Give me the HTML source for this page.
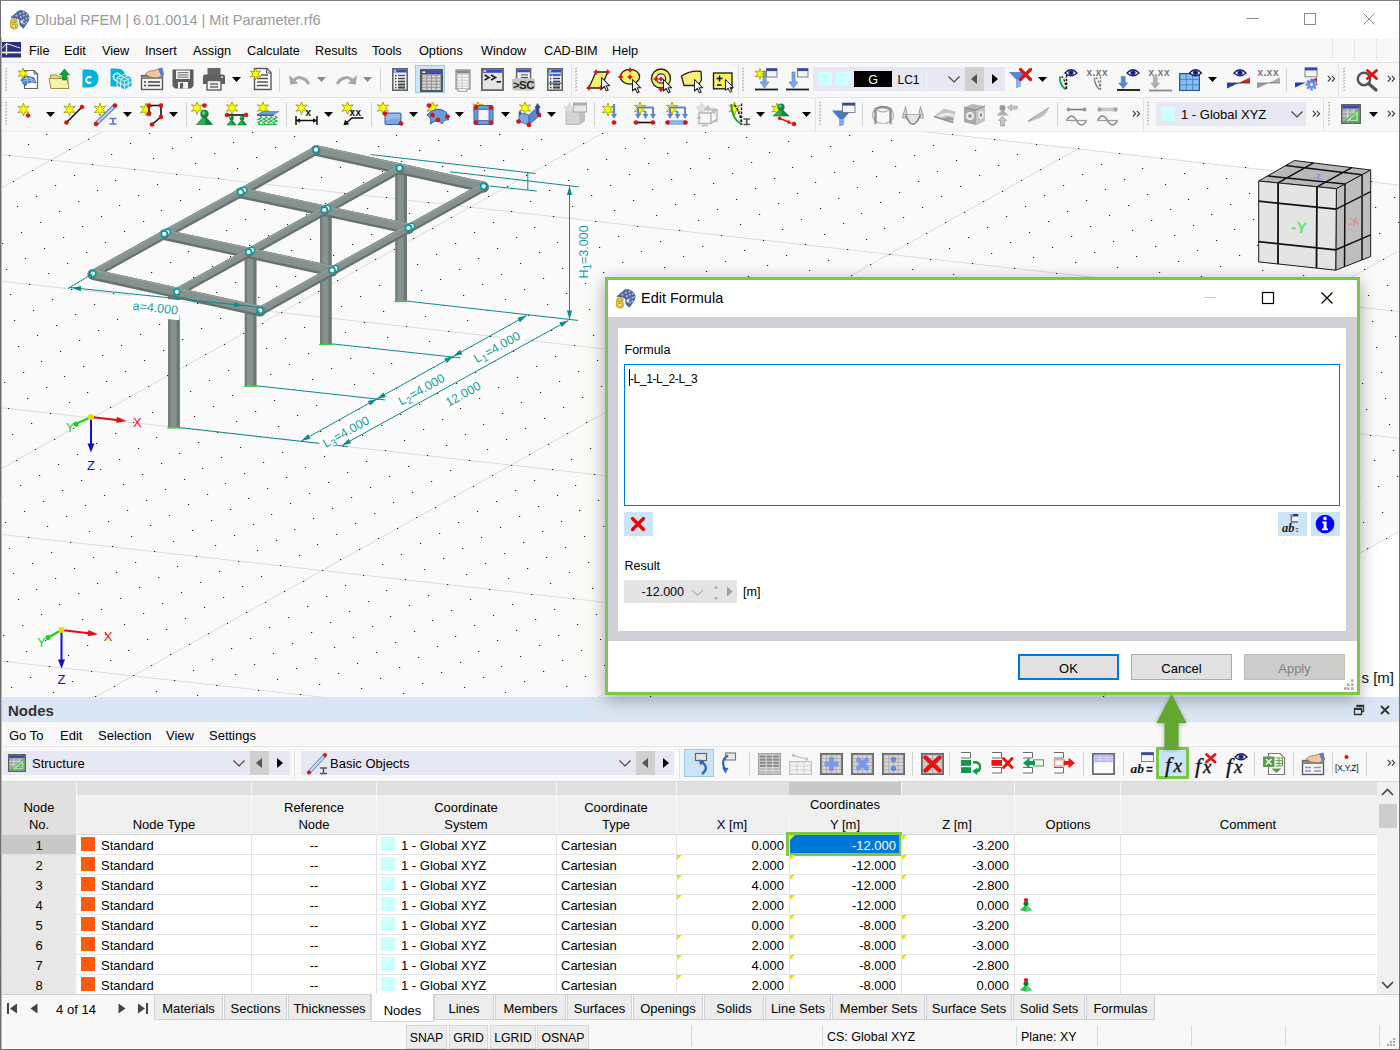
<!DOCTYPE html>
<html><head><meta charset="utf-8"><title>Dlubal RFEM</title>
<style>
html,body{margin:0;padding:0;}
body{width:1400px;height:1050px;overflow:hidden;position:relative;background:#f8f8f8;font-family:"Liberation Sans",sans-serif;font-size:13px;}
body div,body svg{position:absolute;box-sizing:border-box;}
.t{white-space:pre;}
</style></head><body>
<div style="left:0px;top:0px;width:1400px;height:38px;background:#ffffff;"></div>
<div class="t" style="top:12.73px;font-size:14.5px;line-height:14.5px;color:#9a9a9a;white-space:pre;left:35px;">Dlubal RFEM | 6.01.0014 | Mit Parameter.rf6</div>
<svg style="left:1240px;top:8px;" width="140" height="24" viewBox="0 0 140 24"><path d="M6.5 10.5H18.5" stroke="#8a8a8a" stroke-width="1" fill="none"/><rect x="64.5" y="5.5" width="11" height="11" stroke="#8a8a8a" fill="none"/><path d="M123.5 5.5L134.5 16.5M134.5 5.5L123.5 16.5" stroke="#8a8a8a" stroke-width="1" fill="none"/></svg>
<div style="left:0px;top:38px;width:1400px;height:25px;background:#f8f8f8;"></div>
<div class="t" style="top:44.95px;font-size:12.7px;line-height:12.7px;color:#000;white-space:pre;left:29px;">File</div>
<div class="t" style="top:44.95px;font-size:12.7px;line-height:12.7px;color:#000;white-space:pre;left:64px;">Edit</div>
<div class="t" style="top:44.95px;font-size:12.7px;line-height:12.7px;color:#000;white-space:pre;left:102px;">View</div>
<div class="t" style="top:44.95px;font-size:12.7px;line-height:12.7px;color:#000;white-space:pre;left:145px;">Insert</div>
<div class="t" style="top:44.95px;font-size:12.7px;line-height:12.7px;color:#000;white-space:pre;left:193px;">Assign</div>
<div class="t" style="top:44.95px;font-size:12.7px;line-height:12.7px;color:#000;white-space:pre;left:247px;">Calculate</div>
<div class="t" style="top:44.95px;font-size:12.7px;line-height:12.7px;color:#000;white-space:pre;left:315px;">Results</div>
<div class="t" style="top:44.95px;font-size:12.7px;line-height:12.7px;color:#000;white-space:pre;left:372px;">Tools</div>
<div class="t" style="top:44.95px;font-size:12.7px;line-height:12.7px;color:#000;white-space:pre;left:419px;">Options</div>
<div class="t" style="top:44.95px;font-size:12.7px;line-height:12.7px;color:#000;white-space:pre;left:481px;">Window</div>
<div class="t" style="top:44.95px;font-size:12.7px;line-height:12.7px;color:#000;white-space:pre;left:544px;">CAD-BIM</div>
<div class="t" style="top:44.95px;font-size:12.7px;line-height:12.7px;color:#000;white-space:pre;left:612px;">Help</div>
<div style="left:1332px;top:38px;width:1px;height:22px;background:#e3e8f0;"></div>
<div style="left:1354px;top:38px;width:1px;height:22px;background:#e3e8f0;"></div>
<div style="left:1376px;top:38px;width:1px;height:22px;background:#e3e8f0;"></div>
<div style="left:0px;top:62px;width:1400px;height:1px;background:#e6e6e6;"></div>
<div style="left:0px;top:63px;width:1400px;height:34px;background:#f8f8f8;"></div>
<div style="left:0px;top:97px;width:1400px;height:1px;background:#e6e6e6;"></div>
<div style="left:0px;top:98px;width:1400px;height:34px;background:#f8f8f8;"></div>
<div style="left:0px;top:131px;width:1400px;height:1px;background:#ededed;"></div>
<svg style="left:5px;top:67px;" width="3" height="26" viewBox="0 0 3 26"><path d="M0.3 2.2L1.9 0.6" stroke="#b0b0b0" stroke-width="1.1"/><path d="M0.3 5.3L1.9 3.7" stroke="#b0b0b0" stroke-width="1.1"/><path d="M0.3 8.4L1.9 6.8" stroke="#b0b0b0" stroke-width="1.1"/><path d="M0.3 11.5L1.9 9.9" stroke="#b0b0b0" stroke-width="1.1"/><path d="M0.3 14.6L1.9 13.0" stroke="#b0b0b0" stroke-width="1.1"/><path d="M0.3 17.7L1.9 16.1" stroke="#b0b0b0" stroke-width="1.1"/><path d="M0.3 20.8L1.9 19.2" stroke="#b0b0b0" stroke-width="1.1"/><path d="M0.3 23.9L1.9 22.3" stroke="#b0b0b0" stroke-width="1.1"/></svg>
<div style="left:279px;top:68px;width:1px;height:24px;background:#d4d4d4;"></div>
<div style="left:380px;top:68px;width:1px;height:24px;background:#d4d4d4;"></div>
<div style="left:571px;top:64px;width:1px;height:33px;background:#e2e2e2;"></div>
<svg style="left:575px;top:67px;" width="3" height="26" viewBox="0 0 3 26"><path d="M0.3 2.2L1.9 0.6" stroke="#b0b0b0" stroke-width="1.1"/><path d="M0.3 5.3L1.9 3.7" stroke="#b0b0b0" stroke-width="1.1"/><path d="M0.3 8.4L1.9 6.8" stroke="#b0b0b0" stroke-width="1.1"/><path d="M0.3 11.5L1.9 9.9" stroke="#b0b0b0" stroke-width="1.1"/><path d="M0.3 14.6L1.9 13.0" stroke="#b0b0b0" stroke-width="1.1"/><path d="M0.3 17.7L1.9 16.1" stroke="#b0b0b0" stroke-width="1.1"/><path d="M0.3 20.8L1.9 19.2" stroke="#b0b0b0" stroke-width="1.1"/><path d="M0.3 23.9L1.9 22.3" stroke="#b0b0b0" stroke-width="1.1"/></svg>
<div style="left:738px;top:64px;width:1px;height:33px;background:#e2e2e2;"></div>
<svg style="left:742px;top:67px;" width="3" height="26" viewBox="0 0 3 26"><path d="M0.3 2.2L1.9 0.6" stroke="#b0b0b0" stroke-width="1.1"/><path d="M0.3 5.3L1.9 3.7" stroke="#b0b0b0" stroke-width="1.1"/><path d="M0.3 8.4L1.9 6.8" stroke="#b0b0b0" stroke-width="1.1"/><path d="M0.3 11.5L1.9 9.9" stroke="#b0b0b0" stroke-width="1.1"/><path d="M0.3 14.6L1.9 13.0" stroke="#b0b0b0" stroke-width="1.1"/><path d="M0.3 17.7L1.9 16.1" stroke="#b0b0b0" stroke-width="1.1"/><path d="M0.3 20.8L1.9 19.2" stroke="#b0b0b0" stroke-width="1.1"/><path d="M0.3 23.9L1.9 22.3" stroke="#b0b0b0" stroke-width="1.1"/></svg>
<div style="left:1286px;top:68px;width:1px;height:24px;background:#d4d4d4;"></div>
<div style="left:1338px;top:64px;width:1px;height:33px;background:#e2e2e2;"></div>
<svg style="left:1343px;top:67px;" width="3" height="26" viewBox="0 0 3 26"><path d="M0.3 2.2L1.9 0.6" stroke="#b0b0b0" stroke-width="1.1"/><path d="M0.3 5.3L1.9 3.7" stroke="#b0b0b0" stroke-width="1.1"/><path d="M0.3 8.4L1.9 6.8" stroke="#b0b0b0" stroke-width="1.1"/><path d="M0.3 11.5L1.9 9.9" stroke="#b0b0b0" stroke-width="1.1"/><path d="M0.3 14.6L1.9 13.0" stroke="#b0b0b0" stroke-width="1.1"/><path d="M0.3 17.7L1.9 16.1" stroke="#b0b0b0" stroke-width="1.1"/><path d="M0.3 20.8L1.9 19.2" stroke="#b0b0b0" stroke-width="1.1"/><path d="M0.3 23.9L1.9 22.3" stroke="#b0b0b0" stroke-width="1.1"/></svg>
<svg style="left:1327px;top:75px;" width="9" height="8" viewBox="0 0 9 8"><path d="M0.8 0.8L3.6 3.7L0.8 6.6M4.8 0.8L7.6 3.7L4.8 6.6" stroke="#3a3a3a" stroke-width="1.15" fill="none"/></svg>
<svg style="left:1387px;top:75px;" width="9" height="8" viewBox="0 0 9 8"><path d="M0.8 0.8L3.6 3.7L0.8 6.6M4.8 0.8L7.6 3.7L4.8 6.6" stroke="#3a3a3a" stroke-width="1.15" fill="none"/></svg>
<div style="left:415px;top:65px;width:30px;height:28px;background:#cce4f7;border:1px solid #99c9ef;"></div>
<div style="left:813px;top:67px;width:192px;height:24px;background:#e8e8f4;"></div>
<div style="left:818px;top:72px;width:14px;height:14px;background:#ccffff;"></div>
<div style="left:836px;top:72px;width:14px;height:14px;background:#ccffff;"></div>
<div style="left:854px;top:71px;width:38px;height:16px;background:#000000;"></div>
<div class="t" style="top:74.42px;font-size:12.5px;line-height:12.5px;color:#fff;white-space:pre;left:673px;width:400px;text-align:center;">G</div>
<div class="t" style="top:73.84px;font-size:12px;line-height:12px;color:#000;white-space:pre;left:897.5px;">LC1</div>
<div style="left:926px;top:70px;width:1px;height:19px;background:#f4f4fa;"></div>
<svg style="left:948px;top:76px;" width="12" height="7" viewBox="0 0 12 7"><path d="M0.5 0.5L6 6L11.5 0.5" stroke="#444" stroke-width="1.2" fill="none"/></svg>
<div style="left:965px;top:67px;width:19px;height:24px;background:#d0d0d0;"></div>
<div style="left:985px;top:67px;width:19px;height:24px;background:#e8e8f4;"></div>
<svg style="left:970px;top:74px;" width="8" height="10" viewBox="0 0 8 10"><path d="M7 0V10L1 5Z" fill="#555"/></svg>
<svg style="left:991px;top:74px;" width="8" height="10" viewBox="0 0 8 10"><path d="M1 0V10L7 5Z" fill="#000"/></svg>
<svg style="left:5px;top:101px;" width="3" height="26" viewBox="0 0 3 26"><path d="M0.3 2.2L1.9 0.6" stroke="#b0b0b0" stroke-width="1.1"/><path d="M0.3 5.3L1.9 3.7" stroke="#b0b0b0" stroke-width="1.1"/><path d="M0.3 8.4L1.9 6.8" stroke="#b0b0b0" stroke-width="1.1"/><path d="M0.3 11.5L1.9 9.9" stroke="#b0b0b0" stroke-width="1.1"/><path d="M0.3 14.6L1.9 13.0" stroke="#b0b0b0" stroke-width="1.1"/><path d="M0.3 17.7L1.9 16.1" stroke="#b0b0b0" stroke-width="1.1"/><path d="M0.3 20.8L1.9 19.2" stroke="#b0b0b0" stroke-width="1.1"/><path d="M0.3 23.9L1.9 22.3" stroke="#b0b0b0" stroke-width="1.1"/></svg>
<div style="left:186px;top:102px;width:1px;height:24px;background:#d4d4d4;"></div>
<div style="left:286px;top:102px;width:1px;height:24px;background:#d4d4d4;"></div>
<div style="left:371px;top:102px;width:1px;height:24px;background:#d4d4d4;"></div>
<div style="left:594px;top:102px;width:1px;height:24px;background:#d4d4d4;"></div>
<div style="left:815px;top:98px;width:1px;height:33px;background:#e2e2e2;"></div>
<svg style="left:819px;top:101px;" width="3" height="26" viewBox="0 0 3 26"><path d="M0.3 2.2L1.9 0.6" stroke="#b0b0b0" stroke-width="1.1"/><path d="M0.3 5.3L1.9 3.7" stroke="#b0b0b0" stroke-width="1.1"/><path d="M0.3 8.4L1.9 6.8" stroke="#b0b0b0" stroke-width="1.1"/><path d="M0.3 11.5L1.9 9.9" stroke="#b0b0b0" stroke-width="1.1"/><path d="M0.3 14.6L1.9 13.0" stroke="#b0b0b0" stroke-width="1.1"/><path d="M0.3 17.7L1.9 16.1" stroke="#b0b0b0" stroke-width="1.1"/><path d="M0.3 20.8L1.9 19.2" stroke="#b0b0b0" stroke-width="1.1"/><path d="M0.3 23.9L1.9 22.3" stroke="#b0b0b0" stroke-width="1.1"/></svg>
<div style="left:862px;top:102px;width:1px;height:24px;background:#d4d4d4;"></div>
<div style="left:1057px;top:102px;width:1px;height:24px;background:#d4d4d4;"></div>
<div style="left:1143px;top:98px;width:1px;height:33px;background:#e2e2e2;"></div>
<svg style="left:1147px;top:101px;" width="3" height="26" viewBox="0 0 3 26"><path d="M0.3 2.2L1.9 0.6" stroke="#b0b0b0" stroke-width="1.1"/><path d="M0.3 5.3L1.9 3.7" stroke="#b0b0b0" stroke-width="1.1"/><path d="M0.3 8.4L1.9 6.8" stroke="#b0b0b0" stroke-width="1.1"/><path d="M0.3 11.5L1.9 9.9" stroke="#b0b0b0" stroke-width="1.1"/><path d="M0.3 14.6L1.9 13.0" stroke="#b0b0b0" stroke-width="1.1"/><path d="M0.3 17.7L1.9 16.1" stroke="#b0b0b0" stroke-width="1.1"/><path d="M0.3 20.8L1.9 19.2" stroke="#b0b0b0" stroke-width="1.1"/><path d="M0.3 23.9L1.9 22.3" stroke="#b0b0b0" stroke-width="1.1"/></svg>
<svg style="left:1132px;top:110px;" width="9" height="8" viewBox="0 0 9 8"><path d="M0.8 0.8L3.6 3.7L0.8 6.6M4.8 0.8L7.6 3.7L4.8 6.6" stroke="#3a3a3a" stroke-width="1.15" fill="none"/></svg>
<svg style="left:1312px;top:110px;" width="9" height="8" viewBox="0 0 9 8"><path d="M0.8 0.8L3.6 3.7L0.8 6.6M4.8 0.8L7.6 3.7L4.8 6.6" stroke="#3a3a3a" stroke-width="1.15" fill="none"/></svg>
<svg style="left:1387px;top:110px;" width="9" height="8" viewBox="0 0 9 8"><path d="M0.8 0.8L3.6 3.7L0.8 6.6M4.8 0.8L7.6 3.7L4.8 6.6" stroke="#3a3a3a" stroke-width="1.15" fill="none"/></svg>
<div style="left:1323px;top:98px;width:1px;height:33px;background:#e2e2e2;"></div>
<svg style="left:1328px;top:101px;" width="3" height="26" viewBox="0 0 3 26"><path d="M0.3 2.2L1.9 0.6" stroke="#b0b0b0" stroke-width="1.1"/><path d="M0.3 5.3L1.9 3.7" stroke="#b0b0b0" stroke-width="1.1"/><path d="M0.3 8.4L1.9 6.8" stroke="#b0b0b0" stroke-width="1.1"/><path d="M0.3 11.5L1.9 9.9" stroke="#b0b0b0" stroke-width="1.1"/><path d="M0.3 14.6L1.9 13.0" stroke="#b0b0b0" stroke-width="1.1"/><path d="M0.3 17.7L1.9 16.1" stroke="#b0b0b0" stroke-width="1.1"/><path d="M0.3 20.8L1.9 19.2" stroke="#b0b0b0" stroke-width="1.1"/><path d="M0.3 23.9L1.9 22.3" stroke="#b0b0b0" stroke-width="1.1"/></svg>
<div style="left:1156px;top:102px;width:150px;height:24px;background:#e8e8f4;"></div>
<div style="left:1161px;top:107px;width:14px;height:14px;background:#ccffff;"></div>
<div class="t" style="top:108.00px;font-size:13px;line-height:13px;color:#000;white-space:pre;left:1181px;">1 - Global XYZ</div>
<svg style="left:1291px;top:111px;" width="12" height="7" viewBox="0 0 12 7"><path d="M0.5 0.5L6 6L11.5 0.5" stroke="#444" stroke-width="1.2" fill="none"/></svg>
<svg style="left:1369px;top:112px;" width="9" height="5" viewBox="0 0 9 5"><path d="M0 0H9L4.5 5Z" fill="#000"/></svg>
<svg style="left:16px;top:67px;" width="24" height="24" viewBox="0 0 24 24"><path d="M8.5 3.5H18L21.5 7V21.5H8.5Z" fill="#fff" stroke="#666" stroke-width="1.2"/><path d="M18 3.5V7H21.5" fill="none" stroke="#666"/><path d="M5 13Q10 7 18 11L20 16Q13 13 9 19Z" fill="#4a86d8" stroke="#2a4a9a" stroke-width="0.8"/><path d="M8 11.5Q13 9.5 19 13.5M6.5 15Q12 11 19.5 15M10 9.5L12 17M14 9.5L16 15.5" stroke="#b8d4f4" stroke-width="0.7" fill="none"/><path d="M7.0 1.0L8.2 4.5L11.8 3.8L9.3 6.5L11.8 9.2L8.2 8.5L7.0 12.0L5.8 8.5L2.2 9.3L4.7 6.5L2.2 3.7L5.8 4.5Z" fill="#ffff00" stroke="#8a8a00" stroke-width="0.7" stroke-linejoin="round"/></svg>
<svg style="left:47px;top:67px;" width="24" height="24" viewBox="0 0 24 24"><path d="M3.5 8H10L12 10H21V21H3.5Z" fill="#e8dc90" stroke="#a09838" stroke-width="1"/><path d="M2 11.5H20L22 21.5H4Z" fill="#f8f0b0" stroke="#a09838" stroke-width="1"/><path d="M17.5 2L22.5 8H19.5V13H15.5V8H12.5Z" fill="#10a040" stroke="#087030" stroke-width="0.6"/></svg>
<svg style="left:80px;top:67px;" width="24" height="24" viewBox="0 0 24 24"><path d="M2.5 2.5H9Q18.5 2.5 18.5 11.5Q18.5 20.5 9 20.5H2.5Z" fill="#00b4e0"/><path d="M10.5 10.2A3 3 0 1 0 10.5 15.6" stroke="#fff" stroke-width="2.1" fill="none" stroke-linecap="round"/></svg>
<svg style="left:108px;top:67px;" width="24" height="24" viewBox="0 0 24 24"><path d="M2.5 1.5H8Q17.5 1.5 17.5 10.5Q17.5 19.5 8 19.5H2.5Z" fill="#00b4e0"/><circle cx="9" cy="10" r="3.6" fill="none" stroke="#fff" stroke-width="1.6"/><path d="M16.5 7L24 10.5V19L16.5 23L9 19V10.5Z" fill="#18c0e8" stroke="#fff" stroke-width="0.8"/><path d="M9 10.5L16.5 14L24 10.5M16.5 14V23M12.7 8.7L20.2 12.2M20.2 8.7L12.7 12.2M9 14.7L16.5 18.5L24 14.7M12.7 12.3V21M20.2 12.3V21" stroke="#fff" stroke-width="0.8" fill="none"/></svg>
<svg style="left:140px;top:67px;" width="24" height="24" viewBox="0 0 24 24"><rect x="1.5" y="8.5" width="21" height="14" fill="#f4f4f4" stroke="#555" stroke-width="1.3"/><rect x="1.5" y="8.5" width="21" height="3.5" fill="#888"/><path d="M4 15H6M4 18.5H6M8 15H20M8 18.5H20" stroke="#444" stroke-width="1.6"/><path d="M5 7Q9 3 14 3.5L19 2L23 8Q18 12 13 10.5Q9 10.5 5 7Z" fill="#f0c8a0" stroke="#8a6a4a" stroke-width="0.7"/><path d="M18 1.5L22.5 0.5L24 8L21 9Z" fill="#5a80c8"/></svg>
<svg style="left:171px;top:67px;" width="24" height="24" viewBox="0 0 24 24"><path d="M1.5 2.5H22.5V19L20 21.5H4L1.5 19Z" fill="#5c5c5c"/><rect x="5" y="3.5" width="14" height="8.5" fill="#f4f4f4"/><path d="M6.5 5.7H17.5M6.5 8H17.5M6.5 10.2H17.5" stroke="#666" stroke-width="1"/><rect x="7" y="15" width="10" height="6.5" fill="#f0f0f0"/><rect x="9" y="16" width="3" height="5.5" fill="#5c5c5c"/></svg>
<svg style="left:202px;top:67px;" width="24" height="24" viewBox="0 0 24 24"><rect x="5.5" y="1" width="13" height="7" fill="#666"/><path d="M3 7.5H21Q23 7.5 23 9.5V17H1V9.5Q1 7.5 3 7.5Z" fill="#606060"/><rect x="19" y="9.5" width="2" height="1.5" fill="#ddd"/><rect x="5" y="13.5" width="14" height="9.5" fill="#f4f4f4" stroke="#606060" stroke-width="1.4"/><path d="M8 17H16M8 20H16" stroke="#666" stroke-width="1.3"/></svg>
<svg style="left:232px;top:77px;" width="9" height="5" viewBox="0 0 9 5"><path d="M0 0H9L4.5 5Z" fill="#000"/></svg>
<svg style="left:249px;top:67px;" width="24" height="24" viewBox="0 0 24 24"><path d="M5.5 1.5H18L22 5.5V22.5H5.5Z" fill="#fdfdfd" stroke="#5a5a5a" stroke-width="1.4"/><path d="M17.5 1.5V6H22" fill="none" stroke="#5a5a5a" stroke-width="1.1"/><path d="M12 8H19M8 11.5H19M8 15H19M8 18.5H19" stroke="#555" stroke-width="1.4"/><path d="M6.5 1.0L7.8 4.8L11.7 4.0L9.0 7.0L11.7 10.0L7.8 9.2L6.5 13.0L5.2 9.2L1.3 10.0L4.0 7.0L1.3 4.0L5.2 4.8Z" fill="#ffff00" stroke="#8a8a00" stroke-width="0.7" stroke-linejoin="round"/></svg>
<svg style="left:288px;top:67px;" width="24" height="24" viewBox="0 0 24 24"><path d="M4 16Q9 6.5 18.5 13.5" stroke="#a8a8a8" stroke-width="3" fill="none"/><path d="M1 8L2.2 17.5L10.5 16.5Z" fill="#a8a8a8"/><path d="M17 12L21 17" stroke="#a8a8a8" stroke-width="3"/></svg>
<svg style="left:317px;top:77px;" width="9" height="5" viewBox="0 0 9 5"><path d="M0 0H9L4.5 5Z" fill="#8a8a8a"/></svg>
<svg style="left:334px;top:67px;" width="24" height="24" viewBox="0 0 24 24"><path d="M20 16Q15 6.5 5.5 13.5" stroke="#a8a8a8" stroke-width="3" fill="none"/><path d="M23 8L21.8 17.5L13.5 16.5Z" fill="#a8a8a8"/><path d="M7 12L3 17" stroke="#a8a8a8" stroke-width="3"/></svg>
<svg style="left:363px;top:77px;" width="9" height="5" viewBox="0 0 9 5"><path d="M0 0H9L4.5 5Z" fill="#8a8a8a"/></svg>
<svg style="left:392px;top:68px;" width="16" height="23" viewBox="0 0 16 23"><rect x="0.8" y="0.8" width="14.4" height="21.4" fill="#f6f6f6" stroke="#666" stroke-width="1.6"/><rect x="1.5" y="1.5" width="13" height="3" fill="#3a48c8"/><rect x="2.2" y="2.2" width="2" height="1.4" fill="#fff"/><rect x="3" y="6.9" width="1.4" height="1.4" fill="#333"/><path d="M6 7.5H13" stroke="#444" stroke-width="1.2"/><rect x="3" y="9.9" width="1.4" height="1.4" fill="#333"/><path d="M6 10.5H13" stroke="#444" stroke-width="1.45"/><rect x="3" y="12.9" width="1.4" height="1.4" fill="#333"/><path d="M6 13.5H13" stroke="#444" stroke-width="1.7"/><rect x="3" y="15.9" width="1.4" height="1.4" fill="#333"/><path d="M6 16.5H13" stroke="#444" stroke-width="1.95"/><rect x="3" y="18.9" width="1.4" height="1.4" fill="#333"/><path d="M6 19.5H13" stroke="#444" stroke-width="2.2"/></svg>
<svg style="left:420px;top:69px;" width="23" height="23" viewBox="0 0 23 23"><rect x="0.9" y="0.9" width="21.2" height="21.2" fill="#909090" stroke="#555" stroke-width="1.8"/><rect x="1.8" y="1.8" width="19.4" height="3.2" fill="#3a48c8"/><rect x="2.6" y="2.4" width="2.6" height="1.6" fill="#fff"/><rect x="2.6" y="6.4" width="3.7" height="2.1" fill="#d6d6d6"/><rect x="7.3" y="6.4" width="3.7" height="2.1" fill="#d6d6d6"/><rect x="12.0" y="6.4" width="3.7" height="2.1" fill="#d6d6d6"/><rect x="16.7" y="6.4" width="3.7" height="2.1" fill="#d6d6d6"/><rect x="2.6" y="9.5" width="3.7" height="2.1" fill="#d6d6d6"/><rect x="7.3" y="9.5" width="3.7" height="2.1" fill="#d6d6d6"/><rect x="12.0" y="9.5" width="3.7" height="2.1" fill="#d6d6d6"/><rect x="16.7" y="9.5" width="3.7" height="2.1" fill="#d6d6d6"/><rect x="2.6" y="12.6" width="3.7" height="2.1" fill="#d6d6d6"/><rect x="7.3" y="12.6" width="3.7" height="2.1" fill="#d6d6d6"/><rect x="12.0" y="12.6" width="3.7" height="2.1" fill="#d6d6d6"/><rect x="16.7" y="12.6" width="3.7" height="2.1" fill="#d6d6d6"/><rect x="2.6" y="15.7" width="3.7" height="2.1" fill="#d6d6d6"/><rect x="7.3" y="15.7" width="3.7" height="2.1" fill="#d6d6d6"/><rect x="12.0" y="15.7" width="3.7" height="2.1" fill="#d6d6d6"/><rect x="16.7" y="15.7" width="3.7" height="2.1" fill="#d6d6d6"/><rect x="2.6" y="18.8" width="3.7" height="2.1" fill="#d6d6d6"/><rect x="7.3" y="18.8" width="3.7" height="2.1" fill="#d6d6d6"/><rect x="12.0" y="18.8" width="3.7" height="2.1" fill="#d6d6d6"/><rect x="16.7" y="18.8" width="3.7" height="2.1" fill="#d6d6d6"/></svg>
<svg style="left:455px;top:69px;" width="16" height="24" viewBox="0 0 16 24"><rect x="1" y="1" width="14" height="19" fill="#cfcfcf" stroke="#999" stroke-width="1.4"/><rect x="1.6" y="1.6" width="12.8" height="2.6" fill="#8a8a8a"/><rect x="3" y="6.0" width="3.4" height="1.7" fill="#f8f8f8"/><rect x="7.6" y="6.0" width="5.4" height="1.7" fill="#f8f8f8"/><rect x="3" y="8.9" width="3.4" height="1.7" fill="#f8f8f8"/><rect x="7.6" y="8.9" width="5.4" height="1.7" fill="#f8f8f8"/><rect x="3" y="11.8" width="3.4" height="1.7" fill="#f8f8f8"/><rect x="7.6" y="11.8" width="5.4" height="1.7" fill="#f8f8f8"/><rect x="3" y="14.7" width="3.4" height="1.7" fill="#f8f8f8"/><rect x="7.6" y="14.7" width="5.4" height="1.7" fill="#f8f8f8"/><rect x="3" y="17.6" width="3.4" height="1.7" fill="#f8f8f8"/><rect x="7.6" y="17.6" width="5.4" height="1.7" fill="#f8f8f8"/><path d="M3 20V22.5H12V20" fill="#eee" stroke="#aaa" stroke-width="1.2"/></svg>
<svg style="left:481px;top:68px;" width="23" height="23" viewBox="0 0 23 23"><rect x="0.9" y="0.9" width="21.2" height="21.2" fill="#e6e6e6" stroke="#666" stroke-width="1.8"/><rect x="1.8" y="1.8" width="19.4" height="3" fill="#3a48c8"/><rect x="2.6" y="2.4" width="2.6" height="1.4" fill="#fff"/><path d="M3.5 7L8 9.5L3.5 12M10 7L14.5 9.5L10 12" stroke="#222" stroke-width="1.7" fill="none"/><path d="M15.5 13.8H20" stroke="#222" stroke-width="1.7"/></svg>
<svg style="left:511px;top:68px;" width="25" height="24" viewBox="0 0 25 24"><rect x="5.6" y="0.8" width="14" height="14" fill="#f6f6f6" stroke="#666" stroke-width="1.5"/><rect x="6.3" y="1.5" width="12.6" height="2.8" fill="#3a48c8"/><path d="M10 7H17M10 9.5H17" stroke="#444" stroke-width="1.2"/><rect x="1" y="10.2" width="23" height="12.4" rx="3" fill="#c6c6c6"/><text x="2" y="21" font-size="11.5" font-weight="bold" fill="#222" font-family="Liberation Sans,sans-serif" letter-spacing="-0.6">&gt;SC</text></svg>
<svg style="left:547px;top:68px;" width="16" height="23" viewBox="0 0 16 23"><rect x="0.8" y="0.8" width="14.4" height="21.4" fill="#f6f6f6" stroke="#666" stroke-width="1.6"/><rect x="1.5" y="1.5" width="13" height="3" fill="#3a48c8"/><rect x="2.2" y="2.2" width="2" height="1.4" fill="#fff"/><rect x="3" y="6.9" width="1.4" height="1.4" fill="#333"/><path d="M6 7.5H13" stroke="#444" stroke-width="1.2"/><rect x="3" y="9.9" width="1.4" height="1.4" fill="#333"/><path d="M6 10.5H13" stroke="#444" stroke-width="1.45"/><rect x="3" y="12.9" width="1.4" height="1.4" fill="#333"/><path d="M6 13.5H13" stroke="#444" stroke-width="1.7"/><rect x="3" y="15.9" width="1.4" height="1.4" fill="#333"/><path d="M6 16.5H13" stroke="#444" stroke-width="1.95"/><rect x="3" y="18.9" width="1.4" height="1.4" fill="#333"/><path d="M6 19.5H13" stroke="#444" stroke-width="2.2"/><path d="M1.5 6.6H14.5M1.5 15.2H14.5" stroke="#3a78e0" stroke-width="1.6"/></svg>
<svg style="left:580px;top:62px;" width="165" height="36" viewBox="580 62 165 36"><path d="M596 72H607.7L601 88H588.8Z" fill="#f8f070" stroke="#222" stroke-width="1.3" stroke-linejoin="round"/><circle cx="596" cy="72" r="1.5" fill="#e81010" stroke="#a00000" stroke-width="0.4"/><path d="M593.4 72H598.6M596 69.4V74.6" stroke="#e81010" stroke-width="1"/><circle cx="607.7" cy="72" r="1.5" fill="#e81010" stroke="#a00000" stroke-width="0.4"/><path d="M605.1 72H610.3000000000001M607.7 69.4V74.6" stroke="#e81010" stroke-width="1"/><circle cx="588.8" cy="88" r="1.5" fill="#e81010" stroke="#a00000" stroke-width="0.4"/><path d="M586.1999999999999 88H591.4M588.8 85.4V90.6" stroke="#e81010" stroke-width="1"/><circle cx="601" cy="88" r="1.5" fill="#e81010" stroke="#a00000" stroke-width="0.4"/><path d="M598.4 88H603.6M601 85.4V90.6" stroke="#e81010" stroke-width="1"/><path transform="translate(601.5 77.5) scale(1.15)" d="M0 0V10L2.4 7.8L4.2 11.6L5.8 10.9L4 7.2H7.2Z" fill="#fff" stroke="#222" stroke-width="0.9" stroke-linejoin="round"/><ellipse cx="630" cy="76.8" rx="9.6" ry="7.4" fill="#f8f070" stroke="#222" stroke-width="1.3"/><circle cx="630" cy="70" r="1.5" fill="#e81010" stroke="#a00000" stroke-width="0.4"/><path d="M627.4 70H632.6M630 67.4V72.6" stroke="#e81010" stroke-width="1"/><circle cx="620.5" cy="77" r="1.5" fill="#e81010" stroke="#a00000" stroke-width="0.4"/><path d="M617.9 77H623.1M620.5 74.4V79.6" stroke="#e81010" stroke-width="1"/><circle cx="630" cy="77" r="1.5" fill="#e81010" stroke="#a00000" stroke-width="0.4"/><path d="M627.4 77H632.6M630 74.4V79.6" stroke="#e81010" stroke-width="1"/><path transform="translate(632.5 79.5) scale(1.15)" d="M0 0V10L2.4 7.8L4.2 11.6L5.8 10.9L4 7.2H7.2Z" fill="#fff" stroke="#222" stroke-width="0.9" stroke-linejoin="round"/><circle cx="661" cy="78.5" r="9.5" fill="#f8f070" stroke="#222" stroke-width="1.3"/><circle cx="661" cy="78.5" r="4.6" fill="#fff" stroke="#222" stroke-width="1.2"/><circle cx="656" cy="79" r="1.5" fill="#e81010" stroke="#a00000" stroke-width="0.4"/><path d="M653.4 79H658.6M656 76.4V81.6" stroke="#e81010" stroke-width="1"/><circle cx="661" cy="79" r="1.5" fill="#e81010" stroke="#a00000" stroke-width="0.4"/><path d="M658.4 79H663.6M661 76.4V81.6" stroke="#e81010" stroke-width="1"/><circle cx="661" cy="89.5" r="1.5" fill="#e81010" stroke="#a00000" stroke-width="0.4"/><path d="M658.4 89.5H663.6M661 86.9V92.1" stroke="#e81010" stroke-width="1"/><path transform="translate(663.5 79.5) scale(1.15)" d="M0 0V10L2.4 7.8L4.2 11.6L5.8 10.9L4 7.2H7.2Z" fill="#fff" stroke="#222" stroke-width="0.9" stroke-linejoin="round"/><path d="M681.5 76Q691 70 701 71.500L701.5 80L698 85.5H684Z" fill="#f8f070" stroke="#222" stroke-width="1.3" stroke-linejoin="round"/><path transform="translate(694.5 79.5) scale(1.15)" d="M0 0V10L2.4 7.8L4.2 11.6L5.8 10.9L4 7.2H7.2Z" fill="#fff" stroke="#222" stroke-width="0.9" stroke-linejoin="round"/><rect x="713.5" y="73" width="18.5" height="15.8" fill="#f8f060" stroke="#222" stroke-width="1.4"/><path d="M716.5 78.500H722.500M719.500 75.500V81.500M717 85H721.500" stroke="#111" stroke-width="1.5"/><path transform="translate(725.5 79.5) scale(1.1)" d="M0 0V10L2.4 7.8L4.2 11.6L5.8 10.9L4 7.2H7.2Z" fill="#fff" stroke="#222" stroke-width="0.9" stroke-linejoin="round"/></svg>
<svg style="left:754px;top:67px;" width="24" height="24" viewBox="0 0 24 24"><path d="M1 22.5H24" stroke="#222" stroke-width="1.8"/><path d="M9 4V15H6L10.5 21L15 15H12V4Z" fill="#7aa8e8" stroke="#4a78c0" stroke-width="0.6"/><rect x="12.5" y="1.5" width="10.5" height="8.5" fill="#f4f4f4" stroke="#777" stroke-width="0.9"/><rect x="12.5" y="1.5" width="10.5" height="2.6" fill="#3848a8"/><path d="M6.0 1.5L7.2 5.0L10.8 4.2L8.3 7.0L10.8 9.8L7.2 9.0L6.0 12.5L4.8 9.0L1.2 9.8L3.7 7.0L1.2 4.2L4.8 5.0Z" fill="#ffff00" stroke="#8a8a00" stroke-width="0.7" stroke-linejoin="round"/></svg>
<svg style="left:785px;top:67px;" width="24" height="24" viewBox="0 0 24 24"><path d="M1 22.5H24" stroke="#222" stroke-width="1.8"/><path d="M7 5V15H4L8.5 21L13 15H10V5Z" fill="#7aa8e8" stroke="#4a78c0" stroke-width="0.6"/><rect x="12.5" y="1.5" width="10.5" height="8.5" fill="#f4f4f4" stroke="#777" stroke-width="0.9"/><rect x="12.5" y="1.5" width="10.5" height="2.6" fill="#3848a8"/></svg>
<svg style="left:1008px;top:67px;" width="24" height="24" viewBox="0 0 24 24"><path d="M1 5H19L12.5 12.5V19.5L8 21V12.5Z" fill="#5a88d0"/><path d="M8 12.5H12.5V19.5L8 21Z" fill="#8ab0e8"/><path d="M12.5 2.5L22.5 12.5M22.5 2.5L12.5 12.5" stroke="#e81010" stroke-width="3.2" stroke-linecap="round"/></svg>
<svg style="left:1038px;top:77px;" width="9" height="5" viewBox="0 0 9 5"><path d="M0 0H9L4.5 5Z" fill="#000"/></svg>
<svg style="left:1056px;top:67px;" width="24" height="24" viewBox="0 0 24 24"><path d="M9 6Q15 -0.5 21 6Q15 11.5 9 6Z" fill="#fff" stroke="#1a1a6a" stroke-width="1.3"/><circle cx="15" cy="5.7" r="2.7" fill="#2a3aa0"/><circle cx="15" cy="5.7" r="1.1" fill="#0a0a30"/><path d="M4 9.5Q3 17 9.5 22.5" stroke="#10a040" stroke-width="1.8" fill="none"/><path d="M5.5 9.5Q9 12 10.5 22.5M10.5 8V23" stroke="#111" stroke-width="1.4" fill="none" stroke-dasharray="2.4 1.4"/></svg>
<svg style="left:1086px;top:67px;" width="24" height="24" viewBox="0 0 24 24"><text x="0.5" y="9" font-size="10" font-weight="bold" fill="#777" font-family="Liberation Sans,sans-serif" letter-spacing="0.5">x.xx</text><path d="M8.5 10.5Q8 17 13.5 22.5" stroke="#888" stroke-width="1.5" fill="none"/><path d="M10 10.5Q13 13 14.5 22.5M14.5 9.5V23" stroke="#777" stroke-width="1.2" fill="none" stroke-dasharray="2.4 1.4"/></svg>
<svg style="left:1116px;top:67px;" width="25" height="25" viewBox="0 0 25 25"><path d="M11 6Q17 -0.5 23 6Q17 11.5 11 6Z" fill="#fff" stroke="#1a1a6a" stroke-width="1.3"/><circle cx="17" cy="5.7" r="2.7" fill="#2a3aa0"/><circle cx="17" cy="5.7" r="1.1" fill="#0a0a30"/><path d="M5.3 9.5V16H2.8L7.2 21.5L11.6 16H9.1V9.5Z" fill="#5a88d0" stroke="#3a60a8" stroke-width="0.5"/><path d="M1 23H24" stroke="#111" stroke-width="1.8"/></svg>
<svg style="left:1148px;top:67px;" width="25" height="25" viewBox="0 0 25 25"><text x="0.5" y="9" font-size="10" font-weight="bold" fill="#777" font-family="Liberation Sans,sans-serif" letter-spacing="0.5">x.xx</text><path d="M5.3 9.5V16H2.8L7.2 21.5L11.6 16H9.1V9.5Z" fill="#b0b0b0" stroke="#999" stroke-width="0.5"/><path d="M1 23.5H24" stroke="#888" stroke-width="1.8"/></svg>
<svg style="left:1179px;top:67px;" width="25" height="25" viewBox="0 0 25 25"><rect x="0.5" y="6.5" width="20" height="17" fill="#4a8ad0" stroke="#2a5a9a" stroke-width="1"/><rect x="1.6" y="7.6" width="5.2" height="4.3" fill="#8ac0f0"/><rect x="1.6" y="13.0" width="5.2" height="4.3" fill="#8ac0f0"/><rect x="1.6" y="18.4" width="5.2" height="4.3" fill="#8ac0f0"/><rect x="8.0" y="7.6" width="5.2" height="4.3" fill="#8ac0f0"/><rect x="8.0" y="13.0" width="5.2" height="4.3" fill="#8ac0f0"/><rect x="8.0" y="18.4" width="5.2" height="4.3" fill="#8ac0f0"/><rect x="14.4" y="7.6" width="5.2" height="4.3" fill="#8ac0f0"/><rect x="14.4" y="13.0" width="5.2" height="4.3" fill="#8ac0f0"/><rect x="14.4" y="18.4" width="5.2" height="4.3" fill="#8ac0f0"/><path d="M10.5 6Q16.5 -0.5 22.5 6Q16.5 11.5 10.5 6Z" fill="#fff" stroke="#1a1a6a" stroke-width="1.3"/><circle cx="16.5" cy="5.7" r="2.7" fill="#2a3aa0"/><circle cx="16.5" cy="5.7" r="1.1" fill="#0a0a30"/></svg>
<svg style="left:1208px;top:77px;" width="9" height="5" viewBox="0 0 9 5"><path d="M0 0H9L4.5 5Z" fill="#000"/></svg>
<svg style="left:1226px;top:67px;" width="25" height="25" viewBox="0 0 25 25"><path d="M8 6Q14 -0.5 20 6Q14 11.5 8 6Z" fill="#fff" stroke="#1a1a6a" stroke-width="1.3"/><circle cx="14" cy="5.7" r="2.7" fill="#2a3aa0"/><circle cx="14" cy="5.7" r="1.1" fill="#0a0a30"/><path d="M1 16H12.5L1 21.5Z" fill="#2040b8"/><path d="M12.5 16H24V10.5Z" fill="#d02818"/><path d="M1 16H24" stroke="#333" stroke-width="0.8"/></svg>
<svg style="left:1256px;top:67px;" width="25" height="25" viewBox="0 0 25 25"><text x="1.5" y="9" font-size="10" font-weight="bold" fill="#777" font-family="Liberation Sans,sans-serif" letter-spacing="0.5">x.xx</text><path d="M1 16H12.5L1 21.5Z" fill="#999"/><path d="M12.5 16H24V10.5Z" fill="#aaa"/><path d="M1 16H24" stroke="#777" stroke-width="0.8"/></svg>
<svg style="left:1294px;top:67px;" width="25" height="25" viewBox="0 0 25 25"><rect x="11" y="0.8" width="12" height="9" fill="#f4f4f4" stroke="#777" stroke-width="0.9"/><rect x="11" y="0.8" width="12" height="2.6" fill="#3848a8"/><path d="M1 15.5H12L1 20.5Z" fill="#2040b8"/><path d="M12 15.5H23V10.5Z" fill="#d02818"/><path d="M20.5 17.5L23.5 17.5" stroke="#6a8af0" stroke-width="2.4"/><path d="M19.6 19.6L21.7 21.7" stroke="#6a8af0" stroke-width="2.4"/><path d="M17.5 20.5L17.5 23.5" stroke="#6a8af0" stroke-width="2.4"/><path d="M15.4 19.6L13.3 21.7" stroke="#6a8af0" stroke-width="2.4"/><path d="M14.5 17.5L11.5 17.5" stroke="#6a8af0" stroke-width="2.4"/><path d="M15.4 15.4L13.3 13.3" stroke="#6a8af0" stroke-width="2.4"/><path d="M17.5 14.5L17.5 11.5" stroke="#6a8af0" stroke-width="2.4"/><path d="M19.6 15.4L21.7 13.3" stroke="#6a8af0" stroke-width="2.4"/><circle cx="17.5" cy="17.5" r="3.6" fill="#6a8af0"/><circle cx="17.5" cy="17.5" r="1.5" fill="#fff"/></svg>
<svg style="left:1355px;top:67px;" width="25" height="25" viewBox="0 0 25 25"><circle cx="9" cy="12" r="6.2" fill="none" stroke="#555" stroke-width="2.4"/><path d="M13.5 16.5L21 23" stroke="#555" stroke-width="3.2" stroke-linecap="round"/><path d="M12.5 3.5L21.5 11.5M21.5 3.5L12.5 11.5" stroke="#e81010" stroke-width="3" stroke-linecap="round"/></svg>
<svg style="left:14px;top:102px;" width="25" height="25" viewBox="0 0 25 25"><path d="M9.5 1.0L10.9 5.1L15.1 4.2L12.2 7.5L15.1 10.8L10.9 9.9L9.5 14.0L8.1 9.9L3.9 10.8L6.8 7.5L3.9 4.2L8.1 5.1Z" fill="#ffff00" stroke="#8a8a00" stroke-width="0.7" stroke-linejoin="round"/><circle cx="14" cy="13.5" r="2" fill="#e81010" stroke="#a00000" stroke-width="0.4"/></svg>
<svg style="left:46px;top:112px;" width="9" height="5" viewBox="0 0 9 5"><path d="M0 0H9L4.5 5Z" fill="#000"/></svg>
<svg style="left:58px;top:102px;" width="28" height="25" viewBox="0 0 28 25"><path d="M8.5 20.5L24 5" stroke="#111" stroke-width="1.6"/><path d="M11.5 1.0L12.9 5.1L17.1 4.2L14.2 7.5L17.1 10.8L12.9 9.9L11.5 14.0L10.1 9.9L5.9 10.8L8.8 7.5L5.9 4.2L10.1 5.1Z" fill="#ffff00" stroke="#8a8a00" stroke-width="0.7" stroke-linejoin="round"/><circle cx="8.5" cy="20.5" r="2.1" fill="#e81010" stroke="#a00000" stroke-width="0.4"/><circle cx="24" cy="5" r="2.1" fill="#e81010" stroke="#a00000" stroke-width="0.4"/></svg>
<svg style="left:90px;top:102px;" width="28" height="25" viewBox="0 0 28 25"><path d="M6 22L25 3.5" stroke="#4a70b8" stroke-width="4"/><path d="M6 22L25 3.5" stroke="#b8d4f4" stroke-width="2.2"/><path d="M10.0 1.0L11.4 5.1L15.6 4.2L12.7 7.5L15.6 10.8L11.4 9.9L10.0 14.0L8.6 9.9L4.4 10.8L7.3 7.5L4.4 4.2L8.6 5.1Z" fill="#ffff00" stroke="#8a8a00" stroke-width="0.7" stroke-linejoin="round"/><circle cx="6" cy="22" r="2.1" fill="#e81010" stroke="#a00000" stroke-width="0.4"/><circle cx="25" cy="3.5" r="2.1" fill="#e81010" stroke="#a00000" stroke-width="0.4"/><path d="M19.5 16.5H26.5M19.5 22H26.5M23 16.5V22" stroke="#6a7ab0" stroke-width="1.7"/></svg>
<svg style="left:123px;top:112px;" width="9" height="5" viewBox="0 0 9 5"><path d="M0 0H9L4.5 5Z" fill="#000"/></svg>
<svg style="left:138px;top:102px;" width="25" height="25" viewBox="0 0 25 25"><path d="M8.0 1.0L9.4 5.1L13.6 4.2L10.7 7.5L13.6 10.8L9.4 9.9L8.0 14.0L6.6 9.9L2.4 10.8L5.3 7.5L2.4 4.2L6.6 5.1Z" fill="#ffff00" stroke="#8a8a00" stroke-width="0.7" stroke-linejoin="round"/><path d="M11 3.5H23V15L14 22.5M11 3.5V12" stroke="#111" stroke-width="1.6" fill="none"/><circle cx="11" cy="3.5" r="2.1" fill="#e81010" stroke="#a00000" stroke-width="0.4"/><circle cx="23" cy="3.5" r="2.1" fill="#e81010" stroke="#a00000" stroke-width="0.4"/><circle cx="23" cy="15" r="2.1" fill="#e81010" stroke="#a00000" stroke-width="0.4"/><circle cx="14" cy="22.5" r="2.1" fill="#e81010" stroke="#a00000" stroke-width="0.4"/><circle cx="11" cy="12" r="2.1" fill="#e81010" stroke="#a00000" stroke-width="0.4"/></svg>
<svg style="left:169px;top:112px;" width="9" height="5" viewBox="0 0 9 5"><path d="M0 0H9L4.5 5Z" fill="#000"/></svg>
<svg style="left:190px;top:102px;" width="25" height="25" viewBox="0 0 25 25"><path d="M7.0 -0.5L8.4 3.6L12.6 2.8L9.7 6.0L12.6 9.2L8.4 8.4L7.0 12.5L5.6 8.4L1.4 9.3L4.3 6.0L1.4 2.7L5.6 3.6Z" fill="#ffff00" stroke="#8a8a00" stroke-width="0.7" stroke-linejoin="round"/><circle cx="14.5" cy="3.5" r="2.1" fill="#e81010" stroke="#a00000" stroke-width="0.4"/><path d="M14.5 13.5L22.5 22.5H6.5Z" fill="#28b050" stroke="#107030" stroke-width="0.6"/><path d="M14.5 13.5L22.5 22.5H15.5Z" fill="#108838"/><circle cx="14.5" cy="12.0" r="4.2" fill="#108838"/><circle cx="13.7" cy="11.0" r="1.8900000000000001" fill="#50d078"/></svg>
<svg style="left:223px;top:102px;" width="25" height="25" viewBox="0 0 25 25"><path d="M9.0 -0.5L10.4 3.6L14.6 2.8L11.7 6.0L14.6 9.2L10.4 8.4L9.0 12.5L7.6 8.4L3.4 9.3L6.3 6.0L3.4 2.7L7.6 3.6Z" fill="#ffff00" stroke="#8a8a00" stroke-width="0.7" stroke-linejoin="round"/><path d="M4 13H23" stroke="#111" stroke-width="1.6"/><circle cx="4" cy="13" r="2.1" fill="#e81010" stroke="#a00000" stroke-width="0.4"/><circle cx="23" cy="13" r="2.1" fill="#e81010" stroke="#a00000" stroke-width="0.4"/><path d="M8.5 17.5L13.0 23.0H4.0Z" fill="#28b050" stroke="#107030" stroke-width="0.6"/><path d="M8.5 17.5L13.0 23.0H9.5Z" fill="#108838"/><circle cx="8.5" cy="16.0" r="2.4" fill="#108838"/><circle cx="7.7" cy="15.0" r="1.08" fill="#50d078"/><path d="M19 17.5L23.5 23.0H14.5Z" fill="#28b050" stroke="#107030" stroke-width="0.6"/><path d="M19 17.5L23.5 23.0H20Z" fill="#108838"/><circle cx="19" cy="16.0" r="2.4" fill="#108838"/><circle cx="18.2" cy="15.0" r="1.08" fill="#50d078"/></svg>
<svg style="left:255px;top:102px;" width="25" height="25" viewBox="0 0 25 25"><path d="M8.0 -0.5L9.4 3.6L13.6 2.8L10.7 6.0L13.6 9.2L9.4 8.4L8.0 12.5L6.6 8.4L2.4 9.3L5.3 6.0L2.4 2.7L6.6 3.6Z" fill="#ffff00" stroke="#8a8a00" stroke-width="0.7" stroke-linejoin="round"/><path d="M2 12.5L8 9.5H24L19 12.5Z" fill="#6a9ad8" stroke="#3a60a8" stroke-width="0.5"/><path d="M2 12.5H19V14H2Z" fill="#3a60a8"/><path d="M5 14l2 1.6l-4 1.6l4 1.6l-4 1.6l2 1.4" stroke="#28b050" stroke-width="1.2" fill="none"/><path d="M10 14l2 1.6l-4 1.6l4 1.6l-4 1.6l2 1.4" stroke="#28b050" stroke-width="1.2" fill="none"/><path d="M15 14l2 1.6l-4 1.6l4 1.6l-4 1.6l2 1.4" stroke="#28b050" stroke-width="1.2" fill="none"/><path d="M20 14l2 1.6l-4 1.6l4 1.6l-4 1.6l2 1.4" stroke="#28b050" stroke-width="1.2" fill="none"/><path d="M3 22.5H22" stroke="#28b050" stroke-width="1.3"/></svg>
<svg style="left:294px;top:102px;" width="25" height="25" viewBox="0 0 25 25"><path d="M7.5 -0.5L8.9 3.6L13.1 2.8L10.2 6.0L13.1 9.2L8.9 8.4L7.5 12.5L6.1 8.4L1.9 9.3L4.8 6.0L1.9 2.7L6.1 3.6Z" fill="#ffff00" stroke="#8a8a00" stroke-width="0.7" stroke-linejoin="round"/><text x="11.5" y="13.5" font-size="10" font-weight="bold" font-family="Liberation Sans,sans-serif" fill="#111">x</text><path d="M2 14V23M23 14V23M2 18.5H23" stroke="#111" stroke-width="1.5"/><path d="M2 18.5l4-2.2v4.4ZM23 18.5l-4-2.2v4.4Z" fill="#111"/></svg>
<svg style="left:324px;top:112px;" width="9" height="5" viewBox="0 0 9 5"><path d="M0 0H9L4.5 5Z" fill="#000"/></svg>
<svg style="left:340px;top:102px;" width="25" height="25" viewBox="0 0 25 25"><path d="M7.5 -0.5L8.9 3.6L13.1 2.8L10.2 6.0L13.1 9.2L8.9 8.4L7.5 12.5L6.1 8.4L1.9 9.3L4.8 6.0L1.9 2.7L6.1 3.6Z" fill="#ffff00" stroke="#8a8a00" stroke-width="0.7" stroke-linejoin="round"/><text x="9.5" y="13.5" font-size="10" font-weight="bold" font-family="Liberation Sans,sans-serif" fill="#111" letter-spacing="0.4">xx</text><path d="M23.5 16H12L5 22" stroke="#111" stroke-width="1.5" fill="none"/><path d="M3.5 23.2L5 17.8L9.5 22.2Z" fill="#111"/></svg>
<svg style="left:376px;top:102px;" width="28" height="25" viewBox="0 0 28 25"><path d="M7.0 -0.5L8.4 3.6L12.6 2.8L9.7 6.0L12.6 9.2L8.4 8.4L7.0 12.5L5.6 8.4L1.4 9.3L4.3 6.0L1.4 2.7L5.6 3.6Z" fill="#ffff00" stroke="#8a8a00" stroke-width="0.7" stroke-linejoin="round"/><rect x="9" y="11" width="16" height="11.5" rx="1" fill="#7aa8e0" stroke="#3a60a8" stroke-width="1"/><path d="M10 12H24V17Q17 15 10 19Z" fill="#a8c8f0" opacity="0.6"/><circle cx="9" cy="11.5" r="2.1" fill="#e81010" stroke="#a00000" stroke-width="0.4"/><circle cx="25" cy="21.5" r="2.1" fill="#e81010" stroke="#a00000" stroke-width="0.4"/></svg>
<svg style="left:409px;top:112px;" width="9" height="5" viewBox="0 0 9 5"><path d="M0 0H9L4.5 5Z" fill="#000"/></svg>
<svg style="left:424px;top:102px;" width="27" height="25" viewBox="0 0 27 25"><path d="M8.5 -0.5L9.9 3.6L14.1 2.8L11.2 6.0L14.1 9.2L9.9 8.4L8.5 12.5L7.1 8.4L2.9 9.3L5.8 6.0L2.9 2.7L7.1 3.6Z" fill="#ffff00" stroke="#8a8a00" stroke-width="0.7" stroke-linejoin="round"/><path d="M3 13Q12 3 22 10L24.5 18Q20 17 18 22Q13 16 6.5 22Q8 16 3 13Z" fill="#6a9ad8" stroke="#3a60a8" stroke-width="1"/><circle cx="5" cy="3.5" r="2.1" fill="#e81010" stroke="#a00000" stroke-width="0.4"/><circle cx="8.5" cy="13" r="2.1" fill="#e81010" stroke="#a00000" stroke-width="0.4"/><circle cx="14" cy="18" r="2.1" fill="#e81010" stroke="#a00000" stroke-width="0.4"/><circle cx="23.5" cy="14.5" r="2.1" fill="#e81010" stroke="#a00000" stroke-width="0.4"/></svg>
<svg style="left:455px;top:112px;" width="9" height="5" viewBox="0 0 9 5"><path d="M0 0H9L4.5 5Z" fill="#000"/></svg>
<svg style="left:471px;top:102px;" width="25" height="25" viewBox="0 0 25 25"><path d="M7.0 -1.0L8.3 2.8L12.2 2.0L9.5 5.0L12.2 8.0L8.3 7.2L7.0 11.0L5.7 7.2L1.8 8.0L4.5 5.0L1.8 2.0L5.7 2.8Z" fill="#ffff00" stroke="#8a8a00" stroke-width="0.7" stroke-linejoin="round"/><rect x="3" y="3.5" width="19" height="19" rx="1.5" fill="#6a9ad8" stroke="#3a60a8" stroke-width="1"/><rect x="7" y="7.5" width="11" height="11" fill="#f8f8f8" stroke="#3a60a8" stroke-width="0.8"/><circle cx="5" cy="5.5" r="2.1" fill="#e81010" stroke="#a00000" stroke-width="0.4"/><circle cx="20" cy="5.5" r="2.1" fill="#e81010" stroke="#a00000" stroke-width="0.4"/><circle cx="5" cy="20.5" r="2.1" fill="#e81010" stroke="#a00000" stroke-width="0.4"/><circle cx="20" cy="20.5" r="2.1" fill="#e81010" stroke="#a00000" stroke-width="0.4"/></svg>
<svg style="left:501px;top:112px;" width="9" height="5" viewBox="0 0 9 5"><path d="M0 0H9L4.5 5Z" fill="#000"/></svg>
<svg style="left:516px;top:102px;" width="25" height="25" viewBox="0 0 25 25"><path d="M3 10.5L13 13V23L3 19.5Z" fill="#7aa8e0" stroke="#3a60a8" stroke-width="0.8"/><path d="M13 13L23 3.5V14L13 23Z" fill="#5a88c8" stroke="#3a60a8" stroke-width="0.8"/><path d="M21.5 1L24.5 6H22.8V12H20.2V6H18.5Z" fill="#2a4a9a"/><path d="M4 9V13" stroke="#2a4a9a" stroke-width="1.5"/><path d="M9.0 -0.5L10.4 3.6L14.6 2.8L11.7 6.0L14.6 9.2L10.4 8.4L9.0 12.5L7.6 8.4L3.4 9.3L6.3 6.0L3.4 2.7L7.6 3.6Z" fill="#ffff00" stroke="#8a8a00" stroke-width="0.7" stroke-linejoin="round"/><circle cx="2.5" cy="19.5" r="2.1" fill="#e81010" stroke="#a00000" stroke-width="0.4"/><circle cx="13" cy="23" r="2.1" fill="#e81010" stroke="#a00000" stroke-width="0.4"/><circle cx="23.5" cy="13" r="2.1" fill="#e81010" stroke="#a00000" stroke-width="0.4"/></svg>
<svg style="left:547px;top:112px;" width="9" height="5" viewBox="0 0 9 5"><path d="M0 0H9L4.5 5Z" fill="#000"/></svg>
<svg style="left:563px;top:102px;" width="25" height="25" viewBox="0 0 25 25"><path d="M3 9H17V22.5H3Z" fill="#d4d4d4" stroke="#b8b8b8"/><path d="M17 9L22 6V19L17 22.5Z" fill="#c0c0c0"/><path d="M3 9L8 6H22L17 9Z" fill="#e4e4e4"/><rect x="10.5" y="1" width="13" height="9" fill="#e8e8e8" stroke="#a8a8a8"/><rect x="10.5" y="1" width="13" height="2.6" fill="#b0b0b0"/><path d="M6.5 0.5L8 4.5L12 5L9 7.5L10 11.5L6.500 9.300L3 11.5L4 7.500L1 5L5 4.500Z" fill="#e0e0e0" stroke="#c0c0c0" stroke-width="0.6"/></svg>
<svg style="left:598px;top:102px;" width="25" height="25" viewBox="0 0 25 25"><path d="M10.0 1.0L11.4 5.1L15.6 4.2L12.7 7.5L15.6 10.8L11.4 9.9L10.0 14.0L8.6 9.9L4.4 10.8L7.3 7.5L4.4 4.2L8.6 5.1Z" fill="#ffff00" stroke="#8a8a00" stroke-width="0.7" stroke-linejoin="round"/><path d="M16 2V13" stroke="#5a88d0" stroke-width="2.2"/><path d="M13 12H19L16 17Z" fill="#5a88d0"/><circle cx="16" cy="20.5" r="2.1" fill="#e81010" stroke="#a00000" stroke-width="0.4"/></svg>
<svg style="left:631px;top:102px;" width="25" height="25" viewBox="0 0 25 25"><path d="M9.0 0.0L10.4 4.1L14.6 3.2L11.7 6.5L14.6 9.8L10.4 8.9L9.0 13.0L7.6 8.9L3.4 9.8L6.3 6.5L3.4 3.2L7.6 4.1Z" fill="#ffff00" stroke="#8a8a00" stroke-width="0.7" stroke-linejoin="round"/><path d="M7 5.5H22" stroke="#5a88d0" stroke-width="2"/><path d="M7 5V13" stroke="#5a88d0" stroke-width="2"/><path d="M4 12H10L7 17Z" fill="#5a88d0"/><path d="M14.5 9V13" stroke="#5a88d0" stroke-width="2"/><path d="M11.5 12H17.5L14.5 17Z" fill="#5a88d0"/><path d="M22 5V13" stroke="#5a88d0" stroke-width="2"/><path d="M19 12H25L22 17Z" fill="#5a88d0"/><path d="M5 20.5H22" stroke="#111" stroke-width="1.6"/><circle cx="5" cy="20.5" r="2.1" fill="#e81010" stroke="#a00000" stroke-width="0.4"/><circle cx="22" cy="20.5" r="2.1" fill="#e81010" stroke="#a00000" stroke-width="0.4"/></svg>
<svg style="left:663px;top:102px;" width="25" height="25" viewBox="0 0 25 25"><path d="M9.0 0.0L10.4 4.1L14.6 3.2L11.7 6.5L14.6 9.8L10.4 8.9L9.0 13.0L7.6 8.9L3.4 9.8L6.3 6.5L3.4 3.2L7.6 4.1Z" fill="#ffff00" stroke="#8a8a00" stroke-width="0.7" stroke-linejoin="round"/><path d="M7 5.5H22" stroke="#5a88d0" stroke-width="2"/><path d="M7 5V13" stroke="#5a88d0" stroke-width="2"/><path d="M4 12H10L7 17Z" fill="#5a88d0"/><path d="M14.5 9V13" stroke="#5a88d0" stroke-width="2"/><path d="M11.5 12H17.5L14.5 17Z" fill="#5a88d0"/><path d="M22 5V13" stroke="#5a88d0" stroke-width="2"/><path d="M19 12H25L22 17Z" fill="#5a88d0"/><path d="M5 20.5H22" stroke="#8ab8f0" stroke-width="3.6"/><path d="M5 18.7H22M5 22.3H22" stroke="#5a88d0" stroke-width="0.6"/><circle cx="4.5" cy="20.5" r="2.1" fill="#e81010" stroke="#a00000" stroke-width="0.4"/><circle cx="22.5" cy="20.5" r="2.1" fill="#e81010" stroke="#a00000" stroke-width="0.4"/></svg>
<svg style="left:695px;top:102px;" width="25" height="25" viewBox="0 0 25 25"><path d="M4 11L10 7.5H22V17L16 21.5H4ZM4 11H16V21.5M16 11L22 7.5" stroke="#b4b4b4" stroke-width="1.4" fill="none"/><path d="M2 16H6M7 23.5H13M18 19H23" stroke="#b8b8b8" stroke-width="1.6"/><path d="M7 3V6" stroke="#c0c0c0" stroke-width="1.6"/><path d="M4 5H10L7 10Z" fill="#c0c0c0"/><path d="M13 3V6" stroke="#c0c0c0" stroke-width="1.6"/><path d="M10 5H16L13 10Z" fill="#c0c0c0"/><path d="M19 6V9" stroke="#c0c0c0" stroke-width="1.6"/><path d="M16 8H22L19 13Z" fill="#c0c0c0"/><path d="M6.5 0.500L8 4.500L12 5L9 7.500L10 11.5L6.500 9.300L3 11.5L4 7.500L1 5L5 4.500Z" fill="#e4e4e4" stroke="#c4c4c4" stroke-width="0.6"/></svg>
<svg style="left:726px;top:102px;" width="25" height="25" viewBox="0 0 25 25"><path d="M8.5 0.0L9.9 4.1L14.1 3.2L11.2 6.5L14.1 9.8L9.9 8.9L8.5 13.0L7.1 8.9L2.9 9.8L5.8 6.5L2.9 3.2L7.1 4.1Z" fill="#ffff00" stroke="#8a8a00" stroke-width="0.7" stroke-linejoin="round"/><path d="M5.5 2Q5 16 15.5 22.5" stroke="#10a040" stroke-width="1.8" fill="none"/><path d="M8.5 3Q14 10 15.5 22M15.5 1.5V23" stroke="#111" stroke-width="1.4" fill="none" stroke-dasharray="2.6 1.4"/><path d="M17.5 17H24M17.5 22.5H24M20.7 17V22.5" stroke="#555" stroke-width="1.7"/></svg>
<svg style="left:756px;top:112px;" width="9" height="5" viewBox="0 0 9 5"><path d="M0 0H9L4.5 5Z" fill="#000"/></svg>
<svg style="left:771px;top:102px;" width="27" height="26" viewBox="0 0 27 26"><path d="M6.0 1.0L7.3 4.8L11.2 4.0L8.5 7.0L11.2 10.0L7.3 9.2L6.0 13.0L4.7 9.2L0.8 10.0L3.5 7.0L0.8 4.0L4.7 4.8Z" fill="#ffff00" stroke="#8a8a00" stroke-width="0.7" stroke-linejoin="round"/><path d="M10 6.5L18 14.0H2Z" fill="#28b050" stroke="#107030" stroke-width="0.6"/><path d="M10 6.5L18 14.0H11Z" fill="#108838"/><circle cx="10" cy="5.0" r="3.6" fill="#108838"/><circle cx="9.2" cy="4.0" r="1.62" fill="#50d078"/><path d="M9 16.5L19 20.5" stroke="#e81010" stroke-width="1.5"/><path d="M21 21.5L16 21.8L17.5 17.8Z" fill="#e81010"/><circle cx="8.5" cy="16.3" r="1.5" fill="#e81010" stroke="#a00000" stroke-width="0.4"/><circle cx="23" cy="22" r="2.1" fill="#e81010" stroke="#a00000" stroke-width="0.4"/></svg>
<svg style="left:802px;top:112px;" width="9" height="5" viewBox="0 0 9 5"><path d="M0 0H9L4.5 5Z" fill="#000"/></svg>
<svg style="left:831px;top:102px;" width="26" height="26" viewBox="0 0 26 26"><path d="M1 8.500H20L12.5 17V23L8.500 24V17Z" fill="#4a78c8"/><path d="M8.500 17H12.5V23L8.500 24Z" fill="#7aa8e8"/><rect x="11.5" y="1" width="12.5" height="9.5" fill="#f4f4f4" stroke="#777" stroke-width="0.9"/><rect x="11.5" y="1" width="12.5" height="2.6" fill="#3848a8"/></svg>
<svg style="left:871px;top:102px;" width="25" height="25" viewBox="0 0 25 25"><ellipse cx="12" cy="13" rx="10.5" ry="8.500" fill="none" stroke="#b4b4b4" stroke-width="1.2"/><path d="M4.500 20.5V7Q12 3 19.5 7V20.5" stroke="#909090" stroke-width="2.4" fill="none"/><path d="M6 8Q12 12 18 8" stroke="#a0a0a0" stroke-width="1" fill="none"/><circle cx="4.500" cy="21" r="1.5" fill="#a8a8a8"/><circle cx="19.5" cy="21" r="1.5" fill="#a8a8a8"/></svg>
<svg style="left:901px;top:102px;" width="25" height="25" viewBox="0 0 25 25"><path d="M1.5 16L4.500 4.500L7 16ZM17 16L19.5 4.500L22.5 16Z" fill="#d8d8d8" stroke="#a0a0a0" stroke-width="1"/><path d="M4.500 12.5Q12 32 19.5 12.5" stroke="#808080" stroke-width="1.6" fill="#e4e4e4"/><path d="M1 12.5H23" stroke="#b0b0b0" stroke-width="1"/></svg>
<svg style="left:932px;top:102px;" width="25" height="25" viewBox="0 0 25 25"><path d="M2 14.5L12 6.500L23.5 9.500L21 20.5Z" fill="#c4c4c4"/><path d="M5 14Q14 8.500 22.5 12.5L22 15Q14 11.5 8 16Z" fill="#e8e8e8"/><path d="M11 17Q16 13.5 21.5 16.5L21 19Q17 17 14 18.5Z" fill="#a0a0a0"/><path d="M2 14.5L21 20.5" stroke="#909090" stroke-width="1.4"/></svg>
<svg style="left:962px;top:102px;" width="25" height="25" viewBox="0 0 25 25"><path d="M2 5.500L10 2L23 4V19L14 23L2 20Z" fill="#b8b8b8"/><path d="M2 5.500L14 8V23L2 20Z" fill="#a8a8a8"/><path d="M14 8L23 4V19L14 23Z" fill="#c4c4c4"/><circle cx="8" cy="14" r="4.200" fill="#e8e8e8"/><circle cx="8" cy="14" r="1.8" fill="#888"/><ellipse cx="19" cy="13" rx="2.800" ry="4.200" fill="#e8e8e8"/><ellipse cx="19" cy="13" rx="1.1" ry="1.8" fill="#888"/><path d="M2 5.500L14 8L23 4" stroke="#8a8a8a" stroke-width="1" fill="none"/></svg>
<svg style="left:995px;top:102px;" width="25" height="25" viewBox="0 0 25 25"><circle cx="7.500" cy="6" r="3" fill="#999"/><path d="M7.500 7.500L14 13.5H1.5Z" fill="#b0b0b0"/><path d="M12.5 5.500L16.5 2.500V4.200H22V7H16.5V8.800Z" fill="#c4c4c4" stroke="#999" stroke-width="0.7"/><path d="M7.500 14.5L11.5 18.5H9.500V24H5.500V18.5H3.500Z" fill="#c4c4c4" stroke="#999" stroke-width="0.7"/></svg>
<svg style="left:1026px;top:102px;" width="25" height="25" viewBox="0 0 25 25"><path d="M2 19L23 5.500Q20 15 9.500 17.5L2.500 20.5Z" fill="#c0c0c0"/><path d="M2 19L23 5.500" stroke="#a0a0a0" stroke-width="1"/></svg>
<svg style="left:1065px;top:102px;" width="25" height="25" viewBox="0 0 25 25"><path d="M3 7.500H20" stroke="#777" stroke-width="1.5"/><circle cx="3.500" cy="7.500" r="2" fill="#999"/><circle cx="19.5" cy="7.500" r="2" fill="#999"/><path d="M1.5 18.5Q6.500 9.5 11.5 18.5Q16.5 27.5 21.5 18.5" stroke="#888" stroke-width="1.5" fill="none"/><path d="M1.5 18.5H21.5" stroke="#999" stroke-width="1.2"/></svg>
<svg style="left:1096px;top:102px;" width="25" height="25" viewBox="0 0 25 25"><path d="M3 7.500H20" stroke="#c8c8c8" stroke-width="3.6"/><circle cx="3.500" cy="7.500" r="2.2" fill="#a8a8a8"/><circle cx="19.5" cy="7.500" r="2.2" fill="#a8a8a8"/><path d="M1.5 18.5Q6.500 9.5 11.5 18.5Q16.5 27.5 21.5 18.5" stroke="#888" stroke-width="1.5" fill="none"/><path d="M1.5 18.5H21.5" stroke="#999" stroke-width="1.2"/></svg>
<svg style="left:1341px;top:104px;" width="20" height="20" viewBox="0 0 21 21"><rect x="0.8" y="0.8" width="19.4" height="19.4" fill="#a8a8a8" stroke="#555" stroke-width="1.4"/><rect x="1.5" y="1.5" width="18" height="3.2" fill="#3a48b8"/><path d="M1.5 8.500H19.5M1.5 12.5H19.5M7 5V19.5M13 5V19.5" stroke="#e0e0e0" stroke-width="0.9"/><path d="M3.500 18.5L18.5 6V18.5Z" fill="#98f098" stroke="#48a048" stroke-width="1"/><path d="M10.5 16L15.5 11.5V16Z" fill="#a8a8a8" stroke="#48a048" stroke-width="0.8"/></svg>
<div style="left:0px;top:132px;width:1400px;height:565px;background:#ffffff;"></div>
<svg style="left:0px;top:132px;font-family:'Liberation Sans',sans-serif;" width="1400" height="565" viewBox="0 132 1400 565"><path d="M-1017.0 -86.6L1916.0 243.1L593.0 980.9L-2340.0 651.2Z" fill="#fafafa"/><path d="M-1017.0 -86.6L1916.0 243.1M-1206.0 18.8L1727.0 348.5M-1395.0 124.2L1538.0 453.9M-1584.0 229.6L1349.0 559.3M-1773.0 335.0L1160.0 664.7M-1962.0 440.4L971.0 770.1M-2151.0 545.8L782.0 875.5M240.0 54.7L-1083.0 792.5M659.0 101.8L-664.0 839.6M1078.0 148.9L-245.0 886.7M1497.0 196.0L174.0 933.8M1916.0 243.1L593.0 980.9" stroke="#dcdcdc" stroke-width="1" fill="none"/><path d="M46 134.5h1.2M28 144.5h1.2M9 155.5h1.2M88 139.5h1.2M69 149.5h1.2M51 160.5h1.2M32 170.5h1.2M13 181.5h1.2M149 133.5h1.2M130 143.5h1.2M111 154.5h1.2M92 164.5h1.2M74 175.5h1.2M55 185.5h1.2M36 196.5h1.2M17 206.5h1.2M-1 217.5h1.2M191 137.5h1.2M172 148.5h1.2M153 158.5h1.2M134 169.5h1.2M115 180.5h1.2M97 190.5h1.2M78 201.5h1.2M59 211.5h1.2M40 222.5h1.2M21 232.5h1.2M2 243.5h1.2M252 132.5h1.2M233 142.5h1.2M214 153.5h1.2M195 163.5h1.2M176 174.5h1.2M157 184.5h1.2M138 195.5h1.2M119 205.5h1.2M101 216.5h1.2M82 226.5h1.2M63 237.5h1.2M44 248.5h1.2M25 258.5h1.2M6 269.5h1.2M294 136.5h1.2M275 147.5h1.2M256 157.5h1.2M237 168.5h1.2M218 178.5h1.2M199 189.5h1.2M180 200.5h1.2M161 210.5h1.2M143 221.5h1.2M124 231.5h1.2M105 242.5h1.2M86 252.5h1.2M67 263.5h1.2M48 273.5h1.2M29 284.5h1.2M10 294.5h1.2M354 130.5h1.2M336 141.5h1.2M317 152.5h1.2M298 162.5h1.2M279 173.5h1.2M260 183.5h1.2M241 194.5h1.2M222 204.5h1.2M203 215.5h1.2M184 225.5h1.2M166 236.5h1.2M147 246.5h1.2M128 257.5h1.2M109 267.5h1.2M90 278.5h1.2M71 289.5h1.2M52 299.5h1.2M33 310.5h1.2M14 320.5h1.2M396 135.5h1.2M378 146.5h1.2M359 156.5h1.2M340 167.5h1.2M321 177.5h1.2M302 188.5h1.2M283 198.5h1.2M264 209.5h1.2M245 219.5h1.2M226 230.5h1.2M207 241.5h1.2M188 251.5h1.2M170 262.5h1.2M151 272.5h1.2M132 283.5h1.2M113 293.5h1.2M94 304.5h1.2M75 314.5h1.2M56 325.5h1.2M37 335.5h1.2M18 346.5h1.2M0 357.5h1.2M438 140.5h1.2M419 150.5h1.2M401 161.5h1.2M382 171.5h1.2M363 182.5h1.2M344 193.5h1.2M325 203.5h1.2M306 214.5h1.2M287 224.5h1.2M268 235.5h1.2M249 245.5h1.2M230 256.5h1.2M212 266.5h1.2M193 277.5h1.2M174 287.5h1.2M155 298.5h1.2M136 309.5h1.2M117 319.5h1.2M98 330.5h1.2M79 340.5h1.2M60 351.5h1.2M41 361.5h1.2M23 372.5h1.2M4 382.5h1.2M499 134.5h1.2M480 145.5h1.2M461 155.5h1.2M442 166.5h1.2M423 176.5h1.2M405 187.5h1.2M386 197.5h1.2M367 208.5h1.2M348 218.5h1.2M329 229.5h1.2M310 239.5h1.2M291 250.5h1.2M272 261.5h1.2M253 271.5h1.2M235 282.5h1.2M216 292.5h1.2M197 303.5h1.2M178 313.5h1.2M159 324.5h1.2M140 334.5h1.2M121 345.5h1.2M102 355.5h1.2M83 366.5h1.2M64 376.5h1.2M46 387.5h1.2M27 398.5h1.2M8 408.5h1.2M541 139.5h1.2M522 149.5h1.2M503 160.5h1.2M484 170.5h1.2M465 181.5h1.2M447 191.5h1.2M428 202.5h1.2M409 213.5h1.2M390 223.5h1.2M371 234.5h1.2M352 244.5h1.2M333 255.5h1.2M314 265.5h1.2M295 276.5h1.2M276 286.5h1.2M258 297.5h1.2M239 307.5h1.2M220 318.5h1.2M201 328.5h1.2M182 339.5h1.2M163 350.5h1.2M144 360.5h1.2M125 371.5h1.2M106 381.5h1.2M87 392.5h1.2M69 402.5h1.2M50 413.5h1.2M31 423.5h1.2M12 434.5h1.2M602 133.5h1.2M583 143.5h1.2M564 154.5h1.2M545 165.5h1.2M526 175.5h1.2M507 186.5h1.2M488 196.5h1.2M470 207.5h1.2M451 217.5h1.2M432 228.5h1.2M413 238.5h1.2M394 249.5h1.2M375 259.5h1.2M356 270.5h1.2M337 280.5h1.2M318 291.5h1.2M299 302.5h1.2M281 312.5h1.2M262 323.5h1.2M243 333.5h1.2M224 344.5h1.2M205 354.5h1.2M186 365.5h1.2M167 375.5h1.2M148 386.5h1.2M129 396.5h1.2M110 407.5h1.2M92 418.5h1.2M73 428.5h1.2M54 439.5h1.2M35 449.5h1.2M16 460.5h1.2M644 138.5h1.2M625 148.5h1.2M606 159.5h1.2M587 169.5h1.2M568 180.5h1.2M549 190.5h1.2M530 201.5h1.2M511 211.5h1.2M493 222.5h1.2M474 232.5h1.2M455 243.5h1.2M436 254.5h1.2M417 264.5h1.2M398 275.5h1.2M379 285.5h1.2M360 296.5h1.2M341 306.5h1.2M322 317.5h1.2M304 327.5h1.2M285 338.5h1.2M266 348.5h1.2M247 359.5h1.2M228 370.5h1.2M209 380.5h1.2M190 391.5h1.2M171 401.5h1.2M152 412.5h1.2M133 422.5h1.2M115 433.5h1.2M96 443.5h1.2M77 454.5h1.2M58 464.5h1.2M39 475.5h1.2M20 485.5h1.2M1 496.5h1.2M705 132.5h1.2M686 142.5h1.2M667 153.5h1.2M648 163.5h1.2M629 174.5h1.2M610 185.5h1.2M591 195.5h1.2M572 206.5h1.2M553 216.5h1.2M534 227.5h1.2M516 237.5h1.2M497 248.5h1.2M478 258.5h1.2M459 269.5h1.2M440 279.5h1.2M421 290.5h1.2M402 300.5h1.2M383 311.5h1.2M364 322.5h1.2M345 332.5h1.2M327 343.5h1.2M308 353.5h1.2M289 364.5h1.2M270 374.5h1.2M251 385.5h1.2M232 395.5h1.2M213 406.5h1.2M194 416.5h1.2M175 427.5h1.2M156 437.5h1.2M138 448.5h1.2M119 459.5h1.2M100 469.5h1.2M81 480.5h1.2M62 490.5h1.2M43 501.5h1.2M24 511.5h1.2M5 522.5h1.2M746 137.5h1.2M728 147.5h1.2M709 158.5h1.2M690 168.5h1.2M671 179.5h1.2M652 189.5h1.2M633 200.5h1.2M614 210.5h1.2M595 221.5h1.2M576 231.5h1.2M557 242.5h1.2M539 252.5h1.2M520 263.5h1.2M501 274.5h1.2M482 284.5h1.2M463 295.5h1.2M444 305.5h1.2M425 316.5h1.2M406 326.5h1.2M387 337.5h1.2M368 347.5h1.2M350 358.5h1.2M331 368.5h1.2M312 379.5h1.2M293 389.5h1.2M274 400.5h1.2M255 411.5h1.2M236 421.5h1.2M217 432.5h1.2M198 442.5h1.2M179 453.5h1.2M161 463.5h1.2M142 474.5h1.2M123 484.5h1.2M104 495.5h1.2M85 505.5h1.2M66 516.5h1.2M47 526.5h1.2M28 537.5h1.2M9 548.5h1.2M807 131.5h1.2M788 141.5h1.2M769 152.5h1.2M751 162.5h1.2M732 173.5h1.2M713 183.5h1.2M694 194.5h1.2M675 204.5h1.2M656 215.5h1.2M637 226.5h1.2M618 236.5h1.2M599 247.5h1.2M580 257.5h1.2M562 268.5h1.2M543 278.5h1.2M524 289.5h1.2M505 299.5h1.2M486 310.5h1.2M467 320.5h1.2M448 331.5h1.2M429 341.5h1.2M410 352.5h1.2M391 363.5h1.2M373 373.5h1.2M354 384.5h1.2M335 394.5h1.2M316 405.5h1.2M297 415.5h1.2M278 426.5h1.2M259 436.5h1.2M240 447.5h1.2M221 457.5h1.2M202 468.5h1.2M184 479.5h1.2M165 489.5h1.2M146 500.5h1.2M127 510.5h1.2M108 521.5h1.2M89 531.5h1.2M70 542.5h1.2M51 552.5h1.2M32 563.5h1.2M13 573.5h1.2M849 135.5h1.2M830 146.5h1.2M811 156.5h1.2M792 167.5h1.2M774 178.5h1.2M755 188.5h1.2M736 199.5h1.2M717 209.5h1.2M698 220.5h1.2M679 230.5h1.2M660 241.5h1.2M641 251.5h1.2M622 262.5h1.2M603 272.5h1.2M585 283.5h1.2M566 293.5h1.2M547 304.5h1.2M528 315.5h1.2M509 325.5h1.2M490 336.5h1.2M471 346.5h1.2M452 357.5h1.2M433 367.5h1.2M414 378.5h1.2M396 388.5h1.2M377 399.5h1.2M358 409.5h1.2M339 420.5h1.2M320 431.5h1.2M301 441.5h1.2M282 452.5h1.2M263 462.5h1.2M244 473.5h1.2M225 483.5h1.2M207 494.5h1.2M188 504.5h1.2M169 515.5h1.2M150 525.5h1.2M131 536.5h1.2M112 546.5h1.2M93 557.5h1.2M74 568.5h1.2M55 578.5h1.2M36 589.5h1.2M18 599.5h1.2M0 610.5h1.2M910 130.5h1.2M891 140.5h1.2M872 151.5h1.2M853 161.5h1.2M834 172.5h1.2M815 182.5h1.2M797 193.5h1.2M778 203.5h1.2M759 214.5h1.2M740 224.5h1.2M721 235.5h1.2M702 246.5h1.2M683 256.5h1.2M664 267.5h1.2M645 277.5h1.2M626 288.5h1.2M608 298.5h1.2M589 309.5h1.2M570 319.5h1.2M551 330.5h1.2M532 340.5h1.2M513 351.5h1.2M494 361.5h1.2M475 372.5h1.2M456 383.5h1.2M437 393.5h1.2M419 404.5h1.2M400 414.5h1.2M381 425.5h1.2M362 435.5h1.2M343 446.5h1.2M324 456.5h1.2M305 467.5h1.2M286 477.5h1.2M267 488.5h1.2M248 498.5h1.2M230 509.5h1.2M211 520.5h1.2M192 530.5h1.2M173 541.5h1.2M154 551.5h1.2M135 562.5h1.2M116 572.5h1.2M97 583.5h1.2M78 593.5h1.2M59 604.5h1.2M41 614.5h1.2M22 625.5h1.2M3 635.5h1.2M952 134.5h1.2M933 145.5h1.2M914 155.5h1.2M895 166.5h1.2M876 176.5h1.2M857 187.5h1.2M838 198.5h1.2M820 208.5h1.2M801 219.5h1.2M782 229.5h1.2M763 240.5h1.2M744 250.5h1.2M725 261.5h1.2M706 271.5h1.2M687 282.5h1.2M668 292.5h1.2M649 303.5h1.2M631 313.5h1.2M612 324.5h1.2M593 335.5h1.2M574 345.5h1.2M555 356.5h1.2M536 366.5h1.2M517 377.5h1.2M498 387.5h1.2M479 398.5h1.2M460 408.5h1.2M442 419.5h1.2M423 429.5h1.2M404 440.5h1.2M385 450.5h1.2M366 461.5h1.2M347 472.5h1.2M328 482.5h1.2M309 493.5h1.2M290 503.5h1.2M271 514.5h1.2M253 524.5h1.2M234 535.5h1.2M215 545.5h1.2M196 556.5h1.2M177 566.5h1.2M158 577.5h1.2M139 587.5h1.2M120 598.5h1.2M101 609.5h1.2M82 619.5h1.2M64 630.5h1.2M45 640.5h1.2M26 651.5h1.2M7 661.5h1.2M994 139.5h1.2M975 150.5h1.2M956 160.5h1.2M937 171.5h1.2M918 181.5h1.2M899 192.5h1.2M880 202.5h1.2M861 213.5h1.2M843 223.5h1.2M824 234.5h1.2M805 244.5h1.2M786 255.5h1.2M767 265.5h1.2M748 276.5h1.2M729 287.5h1.2M710 297.5h1.2M691 308.5h1.2M672 318.5h1.2M654 329.5h1.2M635 339.5h1.2M616 350.5h1.2M597 360.5h1.2M578 371.5h1.2M559 381.5h1.2M540 392.5h1.2M521 402.5h1.2M502 413.5h1.2M483 424.5h1.2M465 434.5h1.2M446 445.5h1.2M427 455.5h1.2M408 466.5h1.2M389 476.5h1.2M370 487.5h1.2M351 497.5h1.2M332 508.5h1.2M313 518.5h1.2M294 529.5h1.2M276 540.5h1.2M257 550.5h1.2M238 561.5h1.2M219 571.5h1.2M200 582.5h1.2M181 592.5h1.2M162 603.5h1.2M143 613.5h1.2M124 624.5h1.2M105 634.5h1.2M87 645.5h1.2M68 655.5h1.2M49 666.5h1.2M30 677.5h1.2M11 687.5h1.2M1036 144.5h1.2M1017 154.5h1.2M998 165.5h1.2M979 175.5h1.2M960 186.5h1.2M941 196.5h1.2M922 207.5h1.2M903 217.5h1.2M884 228.5h1.2M866 239.5h1.2M847 249.5h1.2M828 260.5h1.2M809 270.5h1.2M790 281.5h1.2M771 291.5h1.2M752 302.5h1.2M733 312.5h1.2M714 323.5h1.2M695 333.5h1.2M677 344.5h1.2M658 354.5h1.2M639 365.5h1.2M620 376.5h1.2M601 386.5h1.2M582 397.5h1.2M563 407.5h1.2M544 418.5h1.2M525 428.5h1.2M506 439.5h1.2M487 449.5h1.2M469 460.5h1.2M450 470.5h1.2M431 481.5h1.2M412 492.5h1.2M393 502.5h1.2M374 513.5h1.2M355 523.5h1.2M336 534.5h1.2M317 544.5h1.2M299 555.5h1.2M280 565.5h1.2M261 576.5h1.2M242 586.5h1.2M223 597.5h1.2M204 607.5h1.2M185 618.5h1.2M166 629.5h1.2M147 639.5h1.2M128 650.5h1.2M110 660.5h1.2M91 671.5h1.2M72 681.5h1.2M53 692.5h1.2M1078 148.5h1.2M1059 159.5h1.2M1040 169.5h1.2M1021 180.5h1.2M1002 191.5h1.2M983 201.5h1.2M964 212.5h1.2M945 222.5h1.2M926 233.5h1.2M907 243.5h1.2M889 254.5h1.2M870 264.5h1.2M851 275.5h1.2M832 285.5h1.2M813 296.5h1.2M794 307.5h1.2M775 317.5h1.2M756 328.5h1.2M737 338.5h1.2M718 349.5h1.2M700 359.5h1.2M681 370.5h1.2M662 380.5h1.2M643 391.5h1.2M624 401.5h1.2M605 412.5h1.2M586 422.5h1.2M567 433.5h1.2M548 444.5h1.2M529 454.5h1.2M511 465.5h1.2M492 475.5h1.2M473 486.5h1.2M454 496.5h1.2M435 507.5h1.2M416 517.5h1.2M397 528.5h1.2M378 538.5h1.2M359 549.5h1.2M340 559.5h1.2M322 570.5h1.2M303 581.5h1.2M284 591.5h1.2M265 602.5h1.2M246 612.5h1.2M227 623.5h1.2M208 633.5h1.2M189 644.5h1.2M170 654.5h1.2M151 665.5h1.2M133 675.5h1.2M114 686.5h1.2M95 696.5h1.2M1119 153.5h1.2M1101 164.5h1.2M1082 174.5h1.2M1063 185.5h1.2M1044 195.5h1.2M1025 206.5h1.2M1006 216.5h1.2M987 227.5h1.2M968 237.5h1.2M949 248.5h1.2M930 259.5h1.2M912 269.5h1.2M893 280.5h1.2M874 290.5h1.2M855 301.5h1.2M836 311.5h1.2M817 322.5h1.2M798 332.5h1.2M779 343.5h1.2M760 353.5h1.2M741 364.5h1.2M723 374.5h1.2M704 385.5h1.2M685 396.5h1.2M666 406.5h1.2M647 417.5h1.2M628 427.5h1.2M609 438.5h1.2M590 448.5h1.2M571 459.5h1.2M552 469.5h1.2M534 480.5h1.2M515 490.5h1.2M496 501.5h1.2M477 511.5h1.2M458 522.5h1.2M439 533.5h1.2M420 543.5h1.2M401 554.5h1.2M382 564.5h1.2M363 575.5h1.2M345 585.5h1.2M326 596.5h1.2M307 606.5h1.2M288 617.5h1.2M269 627.5h1.2M250 638.5h1.2M231 648.5h1.2M212 659.5h1.2M193 670.5h1.2M174 680.5h1.2M156 691.5h1.2M1161 158.5h1.2M1142 168.5h1.2M1124 179.5h1.2M1105 189.5h1.2M1086 200.5h1.2M1067 211.5h1.2M1048 221.5h1.2M1029 232.5h1.2M1010 242.5h1.2M991 253.5h1.2M972 263.5h1.2M953 274.5h1.2M935 284.5h1.2M916 295.5h1.2M897 305.5h1.2M878 316.5h1.2M859 326.5h1.2M840 337.5h1.2M821 348.5h1.2M802 358.5h1.2M783 369.5h1.2M764 379.5h1.2M746 390.5h1.2M727 400.5h1.2M708 411.5h1.2M689 421.5h1.2M670 432.5h1.2M651 442.5h1.2M632 453.5h1.2M613 463.5h1.2M594 474.5h1.2M575 485.5h1.2M557 495.5h1.2M538 506.5h1.2M519 516.5h1.2M500 527.5h1.2M481 537.5h1.2M462 548.5h1.2M443 558.5h1.2M424 569.5h1.2M405 579.5h1.2M386 590.5h1.2M368 601.5h1.2M349 611.5h1.2M330 622.5h1.2M311 632.5h1.2M292 643.5h1.2M273 653.5h1.2M254 664.5h1.2M235 674.5h1.2M216 685.5h1.2M197 695.5h1.2M1203 163.5h1.2M1184 173.5h1.2M1165 184.5h1.2M1147 194.5h1.2M1128 205.5h1.2M1109 215.5h1.2M1090 226.5h1.2M1071 236.5h1.2M1052 247.5h1.2M1033 257.5h1.2M1014 268.5h1.2M995 278.5h1.2M976 289.5h1.2M957 300.5h1.2M939 310.5h1.2M920 321.5h1.2M901 331.5h1.2M882 342.5h1.2M863 352.5h1.2M844 363.5h1.2M825 373.5h1.2M806 384.5h1.2M787 394.5h1.2M768 405.5h1.2M750 415.5h1.2M731 426.5h1.2M712 437.5h1.2M693 447.5h1.2M674 458.5h1.2M655 468.5h1.2M636 479.5h1.2M617 489.5h1.2M598 500.5h1.2M579 510.5h1.2M561 521.5h1.2M542 531.5h1.2M523 542.5h1.2M504 553.5h1.2M485 563.5h1.2M466 574.5h1.2M447 584.5h1.2M428 595.5h1.2M409 605.5h1.2M390 616.5h1.2M372 626.5h1.2M353 637.5h1.2M334 647.5h1.2M315 658.5h1.2M296 668.5h1.2M277 679.5h1.2M258 690.5h1.2M1245 167.5h1.2M1226 178.5h1.2M1207 188.5h1.2M1188 199.5h1.2M1170 209.5h1.2M1151 220.5h1.2M1132 230.5h1.2M1113 241.5h1.2M1094 252.5h1.2M1075 262.5h1.2M1056 273.5h1.2M1037 283.5h1.2M1018 294.5h1.2M999 304.5h1.2M981 315.5h1.2M962 325.5h1.2M943 336.5h1.2M924 346.5h1.2M905 357.5h1.2M886 368.5h1.2M867 378.5h1.2M848 389.5h1.2M829 399.5h1.2M810 410.5h1.2M792 420.5h1.2M773 431.5h1.2M754 441.5h1.2M735 452.5h1.2M716 462.5h1.2M697 473.5h1.2M678 483.5h1.2M659 494.5h1.2M640 505.5h1.2M621 515.5h1.2M603 526.5h1.2M584 536.5h1.2M565 547.5h1.2M546 557.5h1.2M527 568.5h1.2M508 578.5h1.2M489 589.5h1.2M470 599.5h1.2M451 610.5h1.2M432 620.5h1.2M414 631.5h1.2M395 642.5h1.2M376 652.5h1.2M357 663.5h1.2M338 673.5h1.2M319 684.5h1.2M300 694.5h1.2M1287 172.5h1.2M1268 182.5h1.2M1249 193.5h1.2M1230 204.5h1.2M1211 214.5h1.2M1193 225.5h1.2M1174 235.5h1.2M1155 246.5h1.2M1136 256.5h1.2M1117 267.5h1.2M1098 277.5h1.2M1079 288.5h1.2M1060 298.5h1.2M1041 309.5h1.2M1022 320.5h1.2M1004 330.5h1.2M985 341.5h1.2M966 351.5h1.2M947 362.5h1.2M928 372.5h1.2M909 383.5h1.2M890 393.5h1.2M871 404.5h1.2M852 414.5h1.2M833 425.5h1.2M815 435.5h1.2M796 446.5h1.2M777 457.5h1.2M758 467.5h1.2M739 478.5h1.2M720 488.5h1.2M701 499.5h1.2M682 509.5h1.2M663 520.5h1.2M644 530.5h1.2M626 541.5h1.2M607 551.5h1.2M588 562.5h1.2M569 572.5h1.2M550 583.5h1.2M531 594.5h1.2M512 604.5h1.2M493 615.5h1.2M474 625.5h1.2M455 636.5h1.2M437 646.5h1.2M418 657.5h1.2M399 667.5h1.2M380 678.5h1.2M361 688.5h1.2M1329 177.5h1.2M1310 187.5h1.2M1291 198.5h1.2M1272 208.5h1.2M1253 219.5h1.2M1234 229.5h1.2M1216 240.5h1.2M1197 250.5h1.2M1178 261.5h1.2M1159 272.5h1.2M1140 282.5h1.2M1121 293.5h1.2M1102 303.5h1.2M1083 314.5h1.2M1064 324.5h1.2M1045 335.5h1.2M1027 345.5h1.2M1008 356.5h1.2M989 366.5h1.2M970 377.5h1.2M951 387.5h1.2M932 398.5h1.2M913 409.5h1.2M894 419.5h1.2M875 430.5h1.2M856 440.5h1.2M838 451.5h1.2M819 461.5h1.2M800 472.5h1.2M781 482.5h1.2M762 493.5h1.2M743 503.5h1.2M724 514.5h1.2M705 524.5h1.2M686 535.5h1.2M667 546.5h1.2M649 556.5h1.2M630 567.5h1.2M611 577.5h1.2M592 588.5h1.2M573 598.5h1.2M554 609.5h1.2M535 619.5h1.2M516 630.5h1.2M497 640.5h1.2M478 651.5h1.2M460 662.5h1.2M441 672.5h1.2M422 683.5h1.2M403 693.5h1.2M1371 181.5h1.2M1352 192.5h1.2M1333 202.5h1.2M1314 213.5h1.2M1295 224.5h1.2M1276 234.5h1.2M1257 245.5h1.2M1239 255.5h1.2M1220 266.5h1.2M1201 276.5h1.2M1182 287.5h1.2M1163 297.5h1.2M1144 308.5h1.2M1125 318.5h1.2M1106 329.5h1.2M1087 339.5h1.2M1068 350.5h1.2M1050 361.5h1.2M1031 371.5h1.2M1012 382.5h1.2M993 392.5h1.2M974 403.5h1.2M955 413.5h1.2M936 424.5h1.2M917 434.5h1.2M898 445.5h1.2M879 455.5h1.2M861 466.5h1.2M842 476.5h1.2M823 487.5h1.2M804 498.5h1.2M785 508.5h1.2M766 519.5h1.2M747 529.5h1.2M728 540.5h1.2M709 550.5h1.2M690 561.5h1.2M672 571.5h1.2M653 582.5h1.2M634 592.5h1.2M615 603.5h1.2M596 614.5h1.2M577 624.5h1.2M558 635.5h1.2M539 645.5h1.2M520 656.5h1.2M501 666.5h1.2M483 677.5h1.2M464 687.5h1.2M445 698.5h1.2M1394 197.5h1.2M1375 207.5h1.2M1356 218.5h1.2M1337 228.5h1.2M1318 239.5h1.2M1299 249.5h1.2M1280 260.5h1.2M1262 270.5h1.2M1243 281.5h1.2M1224 291.5h1.2M1205 302.5h1.2M1186 313.5h1.2M1167 323.5h1.2M1148 334.5h1.2M1129 344.5h1.2M1110 355.5h1.2M1091 365.5h1.2M1073 376.5h1.2M1054 386.5h1.2M1035 397.5h1.2M1016 407.5h1.2M997 418.5h1.2M978 429.5h1.2M959 439.5h1.2M940 450.5h1.2M921 460.5h1.2M902 471.5h1.2M883 481.5h1.2M865 492.5h1.2M846 502.5h1.2M827 513.5h1.2M808 523.5h1.2M789 534.5h1.2M770 544.5h1.2M751 555.5h1.2M732 566.5h1.2M713 576.5h1.2M695 587.5h1.2M676 597.5h1.2M657 608.5h1.2M638 618.5h1.2M619 629.5h1.2M600 639.5h1.2M581 650.5h1.2M562 660.5h1.2M543 671.5h1.2M524 681.5h1.2M505 692.5h1.2M1398 222.5h1.2M1379 233.5h1.2M1360 243.5h1.2M1341 254.5h1.2M1322 265.5h1.2M1303 275.5h1.2M1285 286.5h1.2M1266 296.5h1.2M1247 307.5h1.2M1228 317.5h1.2M1209 328.5h1.2M1190 338.5h1.2M1171 349.5h1.2M1152 359.5h1.2M1133 370.5h1.2M1114 381.5h1.2M1096 391.5h1.2M1077 402.5h1.2M1058 412.5h1.2M1039 423.5h1.2M1020 433.5h1.2M1001 444.5h1.2M982 454.5h1.2M963 465.5h1.2M944 475.5h1.2M925 486.5h1.2M907 496.5h1.2M888 507.5h1.2M869 518.5h1.2M850 528.5h1.2M831 539.5h1.2M812 549.5h1.2M793 560.5h1.2M774 570.5h1.2M755 581.5h1.2M736 591.5h1.2M718 602.5h1.2M699 612.5h1.2M680 623.5h1.2M661 633.5h1.2M642 644.5h1.2M623 655.5h1.2M604 665.5h1.2M585 676.5h1.2M566 686.5h1.2M547 697.5h1.2M1383 259.5h1.2M1364 269.5h1.2M1345 280.5h1.2M1326 290.5h1.2M1308 301.5h1.2M1289 311.5h1.2M1270 322.5h1.2M1251 333.5h1.2M1232 343.5h1.2M1213 354.5h1.2M1194 364.5h1.2M1175 375.5h1.2M1156 385.5h1.2M1137 396.5h1.2M1119 406.5h1.2M1100 417.5h1.2M1081 427.5h1.2M1062 438.5h1.2M1043 448.5h1.2M1024 459.5h1.2M1005 470.5h1.2M986 480.5h1.2M967 491.5h1.2M948 501.5h1.2M930 512.5h1.2M911 522.5h1.2M892 533.5h1.2M873 543.5h1.2M854 554.5h1.2M835 564.5h1.2M816 575.5h1.2M797 585.5h1.2M778 596.5h1.2M759 607.5h1.2M741 617.5h1.2M722 628.5h1.2M703 638.5h1.2M684 649.5h1.2M665 659.5h1.2M646 670.5h1.2M627 680.5h1.2M608 691.5h1.2M1387 285.5h1.2M1368 295.5h1.2M1349 306.5h1.2M1331 316.5h1.2M1312 327.5h1.2M1293 337.5h1.2M1274 348.5h1.2M1255 358.5h1.2M1236 369.5h1.2M1217 379.5h1.2M1198 390.5h1.2M1179 400.5h1.2M1160 411.5h1.2M1142 422.5h1.2M1123 432.5h1.2M1104 443.5h1.2M1085 453.5h1.2M1066 464.5h1.2M1047 474.5h1.2M1028 485.5h1.2M1009 495.5h1.2M990 506.5h1.2M971 516.5h1.2M953 527.5h1.2M934 537.5h1.2M915 548.5h1.2M896 559.5h1.2M877 569.5h1.2M858 580.5h1.2M839 590.5h1.2M820 601.5h1.2M801 611.5h1.2M782 622.5h1.2M764 632.5h1.2M745 643.5h1.2M726 653.5h1.2M707 664.5h1.2M688 675.5h1.2M669 685.5h1.2M650 696.5h1.2M1391 310.5h1.2M1372 321.5h1.2M1354 331.5h1.2M1335 342.5h1.2M1316 352.5h1.2M1297 363.5h1.2M1278 374.5h1.2M1259 384.5h1.2M1240 395.5h1.2M1221 405.5h1.2M1202 416.5h1.2M1183 426.5h1.2M1165 437.5h1.2M1146 447.5h1.2M1127 458.5h1.2M1108 468.5h1.2M1089 479.5h1.2M1070 490.5h1.2M1051 500.5h1.2M1032 511.5h1.2M1013 521.5h1.2M994 532.5h1.2M976 542.5h1.2M957 553.5h1.2M938 563.5h1.2M919 574.5h1.2M900 584.5h1.2M881 595.5h1.2M862 605.5h1.2M843 616.5h1.2M824 627.5h1.2M805 637.5h1.2M787 648.5h1.2M768 658.5h1.2M749 669.5h1.2M730 679.5h1.2M711 690.5h1.2M1395 336.5h1.2M1376 347.5h1.2M1358 357.5h1.2M1339 368.5h1.2M1320 378.5h1.2M1301 389.5h1.2M1282 399.5h1.2M1263 410.5h1.2M1244 420.5h1.2M1225 431.5h1.2M1206 442.5h1.2M1187 452.5h1.2M1169 463.5h1.2M1150 473.5h1.2M1131 484.5h1.2M1112 494.5h1.2M1093 505.5h1.2M1074 515.5h1.2M1055 526.5h1.2M1036 536.5h1.2M1017 547.5h1.2M998 557.5h1.2M980 568.5h1.2M961 579.5h1.2M942 589.5h1.2M923 600.5h1.2M904 610.5h1.2M885 621.5h1.2M866 631.5h1.2M847 642.5h1.2M828 652.5h1.2M809 663.5h1.2M791 673.5h1.2M772 684.5h1.2M753 694.5h1.2M1400 362.5h1.2M1381 372.5h1.2M1362 383.5h1.2M1343 394.5h1.2M1324 404.5h1.2M1305 415.5h1.2M1286 425.5h1.2M1267 436.5h1.2M1248 446.5h1.2M1229 457.5h1.2M1211 467.5h1.2M1192 478.5h1.2M1173 488.5h1.2M1154 499.5h1.2M1135 509.5h1.2M1116 520.5h1.2M1097 531.5h1.2M1078 541.5h1.2M1059 552.5h1.2M1040 562.5h1.2M1021 573.5h1.2M1003 583.5h1.2M984 594.5h1.2M965 604.5h1.2M946 615.5h1.2M927 625.5h1.2M908 636.5h1.2M889 646.5h1.2M870 657.5h1.2M851 668.5h1.2M833 678.5h1.2M814 689.5h1.2M1385 398.5h1.2M1366 409.5h1.2M1347 419.5h1.2M1328 430.5h1.2M1309 440.5h1.2M1290 451.5h1.2M1271 461.5h1.2M1252 472.5h1.2M1234 483.5h1.2M1215 493.5h1.2M1196 504.5h1.2M1177 514.5h1.2M1158 525.5h1.2M1139 535.5h1.2M1120 546.5h1.2M1101 556.5h1.2M1082 567.5h1.2M1063 577.5h1.2M1045 588.5h1.2M1026 598.5h1.2M1007 609.5h1.2M988 620.5h1.2M969 630.5h1.2M950 641.5h1.2M931 651.5h1.2M912 662.5h1.2M893 672.5h1.2M874 683.5h1.2M856 693.5h1.2M1389 424.5h1.2M1370 435.5h1.2M1351 445.5h1.2M1332 456.5h1.2M1313 466.5h1.2M1294 477.5h1.2M1275 487.5h1.2M1256 498.5h1.2M1238 508.5h1.2M1219 519.5h1.2M1200 529.5h1.2M1181 540.5h1.2M1162 551.5h1.2M1143 561.5h1.2M1124 572.5h1.2M1105 582.5h1.2M1086 593.5h1.2M1067 603.5h1.2M1049 614.5h1.2M1030 624.5h1.2M1011 635.5h1.2M992 645.5h1.2M973 656.5h1.2M954 666.5h1.2M935 677.5h1.2M916 688.5h1.2M897 698.5h1.2M1393 450.5h1.2M1374 460.5h1.2M1355 471.5h1.2M1336 481.5h1.2M1317 492.5h1.2M1298 503.5h1.2M1280 513.5h1.2M1261 524.5h1.2M1242 534.5h1.2M1223 545.5h1.2M1204 555.5h1.2M1185 566.5h1.2M1166 576.5h1.2M1147 587.5h1.2M1128 597.5h1.2M1109 608.5h1.2M1091 618.5h1.2M1072 629.5h1.2M1053 640.5h1.2M1034 650.5h1.2M1015 661.5h1.2M996 671.5h1.2M977 682.5h1.2M958 692.5h1.2M1397 476.5h1.2M1378 486.5h1.2M1359 497.5h1.2M1340 507.5h1.2M1321 518.5h1.2M1303 528.5h1.2M1284 539.5h1.2M1265 549.5h1.2M1246 560.5h1.2M1227 570.5h1.2M1208 581.5h1.2M1189 592.5h1.2M1170 602.5h1.2M1151 613.5h1.2M1132 623.5h1.2M1114 634.5h1.2M1095 644.5h1.2M1076 655.5h1.2M1057 665.5h1.2M1038 676.5h1.2M1019 686.5h1.2M1000 697.5h1.2M1401 501.5h1.2M1382 512.5h1.2M1363 522.5h1.2M1344 533.5h1.2M1326 544.5h1.2M1307 554.5h1.2M1288 565.5h1.2M1269 575.5h1.2M1250 586.5h1.2M1231 596.5h1.2M1212 607.5h1.2M1193 617.5h1.2M1174 628.5h1.2M1155 638.5h1.2M1137 649.5h1.2M1118 659.5h1.2M1099 670.5h1.2M1080 681.5h1.2M1061 691.5h1.2M1386 538.5h1.2M1367 548.5h1.2M1349 559.5h1.2M1330 569.5h1.2M1311 580.5h1.2M1292 590.5h1.2M1273 601.5h1.2M1254 612.5h1.2M1235 622.5h1.2M1216 633.5h1.2M1197 643.5h1.2M1178 654.5h1.2M1160 664.5h1.2M1141 675.5h1.2M1122 685.5h1.2M1103 696.5h1.2" stroke="#222" stroke-width="1" fill="none"/><rect x="395.4" y="170.0" width="11.5" height="131.0" fill="#85928f"/><rect x="395.4" y="170.0" width="2.2" height="131.0" fill="#707c7a"/><rect x="403.8" y="170.0" width="3.2" height="131.0" fill="#6c7876"/><path d="M394.4 301.5H407.9" stroke="#3ed03e" stroke-width="1.3"/><path d="M316.0 150.5L483.6 187.1" stroke="#66726f" stroke-width="10.8" stroke-linecap="round"/><path d="M316.0 149.3L483.6 185.9" stroke="#85928f" stroke-width="8.4" stroke-linecap="round"/><path d="M316.0 145.9L483.6 182.5" stroke="#95a19e" stroke-width="1.2" stroke-linecap="round"/><path d="M316.0 150.5L240.6 192.9" stroke="#66726f" stroke-width="8.8" stroke-linecap="round"/><path d="M316.0 149.3L240.6 191.7" stroke="#85928f" stroke-width="6.4" stroke-linecap="round"/><path d="M316.0 146.9L240.6 189.3" stroke="#95a19e" stroke-width="1.2" stroke-linecap="round"/><path d="M399.6 169.0L324.3 210.8" stroke="#66726f" stroke-width="8.8" stroke-linecap="round"/><path d="M399.6 167.8L324.3 209.6" stroke="#85928f" stroke-width="6.4" stroke-linecap="round"/><path d="M399.6 165.4L324.3 207.2" stroke="#95a19e" stroke-width="1.2" stroke-linecap="round"/><path d="M483.6 187.1L408.4 228.8" stroke="#66726f" stroke-width="8.8" stroke-linecap="round"/><path d="M483.6 185.9L408.4 227.6" stroke="#85928f" stroke-width="6.4" stroke-linecap="round"/><path d="M483.6 183.5L408.4 225.2" stroke="#95a19e" stroke-width="1.2" stroke-linecap="round"/><rect x="320.1" y="212.0" width="11.5" height="132.0" fill="#85928f"/><rect x="320.1" y="212.0" width="2.2" height="132.0" fill="#707c7a"/><rect x="328.4" y="212.0" width="3.2" height="132.0" fill="#6c7876"/><path d="M319.1 344.5H332.6" stroke="#3ed03e" stroke-width="1.3"/><path d="M240.6 192.9L408.4 228.8" stroke="#66726f" stroke-width="10.8" stroke-linecap="round"/><path d="M240.6 191.7L408.4 227.6" stroke="#85928f" stroke-width="8.4" stroke-linecap="round"/><path d="M240.6 188.3L408.4 224.2" stroke="#95a19e" stroke-width="1.2" stroke-linecap="round"/><path d="M240.6 192.9L164.3 234.7" stroke="#66726f" stroke-width="8.8" stroke-linecap="round"/><path d="M240.6 191.7L164.3 233.5" stroke="#85928f" stroke-width="6.4" stroke-linecap="round"/><path d="M240.6 189.3L164.3 231.1" stroke="#95a19e" stroke-width="1.2" stroke-linecap="round"/><path d="M324.3 210.8L248.6 252.9" stroke="#66726f" stroke-width="8.8" stroke-linecap="round"/><path d="M324.3 209.6L248.6 251.7" stroke="#85928f" stroke-width="6.4" stroke-linecap="round"/><path d="M324.3 207.2L248.6 249.3" stroke="#95a19e" stroke-width="1.2" stroke-linecap="round"/><path d="M408.4 228.8L332.1 271.1" stroke="#66726f" stroke-width="8.8" stroke-linecap="round"/><path d="M408.4 227.6L332.1 269.9" stroke="#85928f" stroke-width="6.4" stroke-linecap="round"/><path d="M408.4 225.2L332.1 267.5" stroke="#95a19e" stroke-width="1.2" stroke-linecap="round"/><rect x="244.8" y="254.0" width="11.5" height="131.8" fill="#85928f"/><rect x="244.8" y="254.0" width="2.2" height="131.8" fill="#707c7a"/><rect x="253.2" y="254.0" width="3.2" height="131.8" fill="#6c7876"/><path d="M243.8 386.3H257.4" stroke="#3ed03e" stroke-width="1.3"/><path d="M164.3 234.7L332.1 271.1" stroke="#66726f" stroke-width="10.8" stroke-linecap="round"/><path d="M164.3 233.5L332.1 269.9" stroke="#85928f" stroke-width="8.4" stroke-linecap="round"/><path d="M164.3 230.1L332.1 266.5" stroke="#95a19e" stroke-width="1.2" stroke-linecap="round"/><path d="M164.3 234.7L92.8 274.4" stroke="#66726f" stroke-width="8.8" stroke-linecap="round"/><path d="M164.3 233.5L92.8 273.2" stroke="#85928f" stroke-width="6.4" stroke-linecap="round"/><path d="M164.3 231.1L92.8 270.8" stroke="#95a19e" stroke-width="1.2" stroke-linecap="round"/><path d="M248.6 252.9L176.8 292.6" stroke="#66726f" stroke-width="8.8" stroke-linecap="round"/><path d="M248.6 251.7L176.8 291.4" stroke="#85928f" stroke-width="6.4" stroke-linecap="round"/><path d="M248.6 249.3L176.8 289.0" stroke="#95a19e" stroke-width="1.2" stroke-linecap="round"/><path d="M332.1 271.1L260.3 311.2" stroke="#66726f" stroke-width="8.8" stroke-linecap="round"/><path d="M332.1 269.9L260.3 310.0" stroke="#85928f" stroke-width="6.4" stroke-linecap="round"/><path d="M332.1 267.5L260.3 307.6" stroke="#95a19e" stroke-width="1.2" stroke-linecap="round"/><rect x="168.2" y="294.0" width="11.5" height="133.5" fill="#85928f"/><rect x="168.2" y="294.0" width="2.2" height="133.5" fill="#707c7a"/><rect x="176.6" y="294.0" width="3.2" height="133.5" fill="#6c7876"/><path d="M167.2 428.0H180.8" stroke="#3ed03e" stroke-width="1.3"/><path d="M92.8 274.4L260.3 311.2" stroke="#66726f" stroke-width="10.8" stroke-linecap="round"/><path d="M92.8 273.2L260.3 310.0" stroke="#85928f" stroke-width="8.4" stroke-linecap="round"/><path d="M92.8 269.8L260.3 306.6" stroke="#95a19e" stroke-width="1.2" stroke-linecap="round"/><circle cx="92.8" cy="273.6" r="3" fill="#fff" stroke="#0f9a9a" stroke-width="1.8"/><circle cx="176.8" cy="291.8" r="3" fill="#fff" stroke="#0f9a9a" stroke-width="1.8"/><circle cx="260.3" cy="310.4" r="3" fill="#fff" stroke="#0f9a9a" stroke-width="1.8"/><circle cx="167.5" cy="232.1" r="3" fill="#fff" stroke="#0f9a9a" stroke-width="1.6"/><circle cx="164.3" cy="233.9" r="3" fill="#fff" stroke="#0f9a9a" stroke-width="1.8"/><circle cx="251.8" cy="250.3" r="3" fill="#fff" stroke="#0f9a9a" stroke-width="1.6"/><circle cx="248.6" cy="252.1" r="3" fill="#fff" stroke="#0f9a9a" stroke-width="1.8"/><circle cx="335.3" cy="268.5" r="3" fill="#fff" stroke="#0f9a9a" stroke-width="1.6"/><circle cx="332.1" cy="270.3" r="3" fill="#fff" stroke="#0f9a9a" stroke-width="1.8"/><circle cx="243.8" cy="190.3" r="3" fill="#fff" stroke="#0f9a9a" stroke-width="1.6"/><circle cx="240.6" cy="192.1" r="3" fill="#fff" stroke="#0f9a9a" stroke-width="1.8"/><circle cx="327.5" cy="208.2" r="3" fill="#fff" stroke="#0f9a9a" stroke-width="1.6"/><circle cx="324.3" cy="210.0" r="3" fill="#fff" stroke="#0f9a9a" stroke-width="1.8"/><circle cx="411.6" cy="226.2" r="3" fill="#fff" stroke="#0f9a9a" stroke-width="1.6"/><circle cx="408.4" cy="228.0" r="3" fill="#fff" stroke="#0f9a9a" stroke-width="1.8"/><circle cx="316.0" cy="149.7" r="3" fill="#fff" stroke="#0f9a9a" stroke-width="1.8"/><circle cx="399.6" cy="168.2" r="3" fill="#fff" stroke="#0f9a9a" stroke-width="1.8"/><circle cx="483.6" cy="186.3" r="3" fill="#fff" stroke="#0f9a9a" stroke-width="1.8"/><path d="M370.7 154.6L535.7 173.5M450.0 171.8L578.5 186.8M489.6 186.0L536.8 191.0M527.8 172.9L527.8 190.0M569.5 186.0L569.5 319.6M407.5 301.2L578.0 320.4M332.3 343.9L460.3 357.9M256.5 385.8L384.9 399.9M180.0 427.6L348.0 446.6M526.6 315.6L301.4 440.9M568.4 320.4L342.1 445.4M70.0 287.5L262.0 307.5M92.8 273.6L68.0 288.5M260.3 310.4L253.0 314.8" stroke="#0f8a8a" stroke-width="1" fill="none"/><path d="M569.5 186.0L572.1 195.0L566.9 195.0Z" fill="#0f8a8a"/><path d="M569.5 319.6L566.9 310.6L572.1 310.6Z" fill="#0f8a8a"/><path d="M526.6 315.6L520.0 322.2L517.5 317.7Z" fill="#0f8a8a"/><path d="M453.4 356.3L460.0 349.7L462.5 354.2Z" fill="#0f8a8a"/><path d="M453.4 356.3L446.8 362.9L444.3 358.4Z" fill="#0f8a8a"/><path d="M376.9 399.0L383.5 392.4L386.0 396.9Z" fill="#0f8a8a"/><path d="M376.9 399.0L370.3 405.6L367.8 401.1Z" fill="#0f8a8a"/><path d="M301.4 440.9L308.0 434.3L310.5 438.8Z" fill="#0f8a8a"/><path d="M568.4 320.4L561.8 327.0L559.3 322.5Z" fill="#0f8a8a"/><path d="M342.1 445.4L348.7 438.8L351.2 443.3Z" fill="#0f8a8a"/><path d="M72.0 287.7L81.2 286.0L80.7 291.2Z" fill="#0f8a8a"/><path d="M243.0 305.5L233.8 307.2L234.3 302.0Z" fill="#0f8a8a"/><g transform="translate(496.9 347.1) rotate(-29.2)"><rect x="-29.0" y="-7.5" width="58" height="15" fill="#ffffff"/><text x="0" y="4.3" text-anchor="middle" font-size="12.5" fill="#18a0a0">L<tspan dy="3" font-size="10">1</tspan><tspan dy="-3">=4.000</tspan></text></g><g transform="translate(421.4 389.4) rotate(-29.2)"><rect x="-29.0" y="-7.5" width="58" height="15" fill="#ffffff"/><text x="0" y="4.3" text-anchor="middle" font-size="12.5" fill="#18a0a0">L<tspan dy="3" font-size="10">2</tspan><tspan dy="-3">=4.000</tspan></text></g><g transform="translate(346.0 431.7) rotate(-29.2)"><rect x="-29.0" y="-7.5" width="58" height="15" fill="#ffffff"/><text x="0" y="4.3" text-anchor="middle" font-size="12.5" fill="#18a0a0">L<tspan dy="3" font-size="10">3</tspan><tspan dy="-3">=4.000</tspan></text></g><g transform="translate(463.0 394.0) rotate(-29.2)"><rect x="-21.0" y="-7.5" width="42" height="15" fill="#ffffff"/><text x="0" y="4.3" text-anchor="middle" font-size="12.5" fill="#18a0a0">12.000</text></g><g transform="translate(583.5 252.0) rotate(-90)"><rect x="-31.0" y="-8.0" width="62" height="16" fill="#ffffff"/><text x="0" y="4.3" text-anchor="middle" font-size="12.5" fill="#18a0a0">H<tspan dy="3" font-size="10">1</tspan><tspan dy="-3">=3.000</tspan></text></g><g transform="translate(155.4 307.8) rotate(6)"><rect x="-25.0" y="-10.0" width="50" height="20" fill="#ffffff"/><text x="0" y="4.3" text-anchor="middle" font-size="12.5" fill="#18a0a0">a=4.000</text></g><path d="M91 417L91 446.5" stroke="#1010e0" stroke-width="2"/><path d="M91 452.5l-3.5 -9h7Z" fill="#1010c0"/><path d="M91 417L77 423.5" stroke="#20d020" stroke-width="2.2"/><circle cx="76" cy="424" r="2.6" fill="#20d020"/><path d="M91 417L119.5 420.2" stroke="#e01010" stroke-width="2"/><path d="M126.5 421L116.2 423.1L116.9 416.7Z" fill="#e01010"/><circle cx="91" cy="417" r="3" fill="#f0d800"/><text x="137.3" y="426.8" text-anchor="middle" font-size="13" fill="#f01010">X</text><text x="70" y="432.0" text-anchor="middle" font-size="12" fill="#10d010">Y</text><text x="91" y="469.7" text-anchor="middle" font-size="13" fill="#1010e0">Z</text><path d="M61.5 630L61.5 662.6" stroke="#1010e0" stroke-width="2"/><path d="M61.5 668.6l-3.5 -9h7Z" fill="#1010c0"/><path d="M61.5 630L49 637.0" stroke="#20d020" stroke-width="2.2"/><circle cx="48" cy="637.5" r="2.6" fill="#20d020"/><path d="M61.5 630L91 633.5" stroke="#e01010" stroke-width="2"/><path d="M98 634.3L87.7 636.3L88.4 630.0Z" fill="#e01010"/><circle cx="61.5" cy="630" r="3" fill="#f0d800"/><text x="108" y="640.8" text-anchor="middle" font-size="13" fill="#f01010">X</text><text x="41.4" y="646.5" text-anchor="middle" font-size="12" fill="#10d010">Y</text><text x="61.5" y="683.9" text-anchor="middle" font-size="13" fill="#1010e0">Z</text><path d="M1294.5 160.5L1370.7 170L1336.4 188.7L1258.7 181Z" fill="#b8b8b8" stroke="#1a1a1a" stroke-width="1" stroke-linejoin="round"/><path d="M1313.5 162.9L1278.1 182.9M1285.5 165.6L1362.1 174.7M1351.7 167.6L1317.0 186.8M1267.7 175.9L1345.0 184.0" stroke="#111" stroke-width="1.5" fill="none"/><path d="M1336.4 188.7L1370.7 170L1370.7 256.5L1335.7 270.2Z" fill="#bebebe" stroke="#1a1a1a" stroke-width="1" stroke-linejoin="round"/><path d="M1345.0 184.0L1344.5 266.8M1336.2 209.1L1370.7 191.6M1362.1 174.7L1362.0 259.9M1335.9 249.8L1370.7 234.9" stroke="#111" stroke-width="1.5" fill="none"/><path d="M1258.7 181L1336.4 188.7L1335.7 270.2L1258.7 261.9Z" fill="#e4e4e4" stroke="#1a1a1a" stroke-width="1" stroke-linejoin="round"/><path d="M1278.1 182.9L1278.0 264.0M1258.7 201.2L1336.2 209.1M1317.0 186.8L1316.5 268.1M1258.7 241.7L1335.9 249.8" stroke="#111" stroke-width="1.8" fill="none"/><text x="1299" y="233" text-anchor="middle" font-size="16" font-weight="bold" fill="#6fe36f" transform="rotate(5 1299 227)">-Y</text><text x="1353" y="226" text-anchor="middle" font-size="11" font-weight="bold" fill="#e08a8a" transform="rotate(-20 1353 222)">-X</text><text x="1317" y="179" text-anchor="middle" font-size="8" font-weight="bold" fill="#8a8ad8">-Z</text><text x="1361.5" y="683" font-size="15" fill="#111">s [m]</text></svg>
<div style="left:0px;top:697px;width:1400px;height:25px;background:#dbe6f4;"></div>
<div class="t" style="top:703.30px;font-size:15px;line-height:15px;color:#333;white-space:pre;font-weight:bold;left:8px;">Nodes</div>
<svg style="left:1353px;top:704px;" width="12" height="12" viewBox="0 0 12 12"><path d="M3.5 1.5H10.5V7.5H8.5M1.5 4.5H8.5V10.5H1.5Z" stroke="#333" stroke-width="1.3" fill="none"/><path d="M1.5 5H8.5M3.5 2H10.5" stroke="#333" stroke-width="2"/></svg>
<svg style="left:1379px;top:704px;" width="12" height="12" viewBox="0 0 12 12"><path d="M2 2L10 10M10 2L2 10" stroke="#333" stroke-width="1.8" fill="none"/></svg>
<div style="left:0px;top:722px;width:1400px;height:25px;background:#f8f8f8;"></div>
<div class="t" style="top:729.00px;font-size:13px;line-height:13px;color:#000;white-space:pre;left:9px;">Go To</div>
<div class="t" style="top:729.00px;font-size:13px;line-height:13px;color:#000;white-space:pre;left:60px;">Edit</div>
<div class="t" style="top:729.00px;font-size:13px;line-height:13px;color:#000;white-space:pre;left:98px;">Selection</div>
<div class="t" style="top:729.00px;font-size:13px;line-height:13px;color:#000;white-space:pre;left:166px;">View</div>
<div class="t" style="top:729.00px;font-size:13px;line-height:13px;color:#000;white-space:pre;left:209px;">Settings</div>
<div style="left:0px;top:746px;width:1400px;height:1px;background:#e6e6e6;"></div>
<div style="left:0px;top:747px;width:1400px;height:34px;background:#f8f8f8;"></div>
<div style="left:3px;top:751px;width:287px;height:24px;background:#e8e8f4;"></div>
<div class="t" style="top:757.00px;font-size:13px;line-height:13px;color:#000;white-space:pre;left:32px;">Structure</div>
<svg style="left:233px;top:760px;" width="12" height="7" viewBox="0 0 12 7"><path d="M0.5 0.5L6 6L11.5 0.5" stroke="#444" stroke-width="1.2" fill="none"/></svg>
<div style="left:250px;top:751px;width:19px;height:24px;background:#d0d0d0;"></div>
<svg style="left:255px;top:758px;" width="8" height="10" viewBox="0 0 8 10"><path d="M7 0V10L1 5Z" fill="#555"/></svg>
<svg style="left:276px;top:758px;" width="8" height="10" viewBox="0 0 8 10"><path d="M1 0V10L7 5Z" fill="#000"/></svg>
<div style="left:294px;top:749px;width:1px;height:30px;background:#e2e2e2;"></div>
<div style="left:301px;top:751px;width:373px;height:24px;background:#e8e8f4;"></div>
<div class="t" style="top:757.00px;font-size:13px;line-height:13px;color:#000;white-space:pre;left:330px;">Basic Objects</div>
<svg style="left:619px;top:760px;" width="12" height="7" viewBox="0 0 12 7"><path d="M0.5 0.5L6 6L11.5 0.5" stroke="#444" stroke-width="1.2" fill="none"/></svg>
<div style="left:636px;top:751px;width:19px;height:24px;background:#d0d0d0;"></div>
<svg style="left:641px;top:758px;" width="8" height="10" viewBox="0 0 8 10"><path d="M7 0V10L1 5Z" fill="#555"/></svg>
<svg style="left:662px;top:758px;" width="8" height="10" viewBox="0 0 8 10"><path d="M1 0V10L7 5Z" fill="#000"/></svg>
<div style="left:679px;top:749px;width:1px;height:30px;background:#e2e2e2;"></div>
<div style="left:684px;top:749px;width:30px;height:28px;background:#cce4f7;border:1px solid #99c9ef;"></div>
<div style="left:749px;top:752px;width:1px;height:24px;background:#d4d4d4;"></div>
<div style="left:912px;top:752px;width:1px;height:24px;background:#d4d4d4;"></div>
<div style="left:949px;top:752px;width:1px;height:24px;background:#d4d4d4;"></div>
<div style="left:1083px;top:752px;width:1px;height:24px;background:#d4d4d4;"></div>
<div style="left:1123px;top:752px;width:1px;height:24px;background:#d4d4d4;"></div>
<div style="left:1254px;top:752px;width:1px;height:24px;background:#d4d4d4;"></div>
<div style="left:1293px;top:752px;width:1px;height:24px;background:#d4d4d4;"></div>
<div style="left:1332px;top:752px;width:1px;height:24px;background:#d4d4d4;"></div>
<div style="left:1366px;top:752px;width:1px;height:24px;background:#d4d4d4;"></div>
<svg style="left:1387px;top:759px;" width="9" height="8" viewBox="0 0 9 8"><path d="M0.8 0.8L3.6 3.7L0.8 6.6M4.8 0.8L7.6 3.7L4.8 6.6" stroke="#3a3a3a" stroke-width="1.15" fill="none"/></svg>
<div style="left:0px;top:781px;width:1400px;height:1px;background:#dadada;"></div>
<div style="left:1px;top:782px;width:1376px;height:13px;background:#e0e0e0;"></div>
<div style="left:76px;top:782px;width:1px;height:13px;background:#f4f4f4;"></div>
<div style="left:251px;top:782px;width:1px;height:13px;background:#f4f4f4;"></div>
<div style="left:376px;top:782px;width:1px;height:13px;background:#f4f4f4;"></div>
<div style="left:556px;top:782px;width:1px;height:13px;background:#f4f4f4;"></div>
<div style="left:676px;top:782px;width:1px;height:13px;background:#f4f4f4;"></div>
<div style="left:789px;top:782px;width:1px;height:13px;background:#f4f4f4;"></div>
<div style="left:901px;top:782px;width:1px;height:13px;background:#f4f4f4;"></div>
<div style="left:1014px;top:782px;width:1px;height:13px;background:#f4f4f4;"></div>
<div style="left:1120px;top:782px;width:1px;height:13px;background:#f4f4f4;"></div>
<div style="left:789px;top:782px;width:112px;height:13px;background:#c8c8c8;"></div>
<div style="left:1px;top:795px;width:1376px;height:40px;background:#f0f0f0;"></div>
<div style="left:1px;top:795px;width:75px;height:40px;background:#e0e0e0;"></div>
<div style="left:76px;top:795px;width:1px;height:40px;background:#fbfbfb;"></div>
<div style="left:251px;top:795px;width:1px;height:40px;background:#fbfbfb;"></div>
<div style="left:376px;top:795px;width:1px;height:40px;background:#fbfbfb;"></div>
<div style="left:556px;top:795px;width:1px;height:40px;background:#fbfbfb;"></div>
<div style="left:676px;top:795px;width:1px;height:40px;background:#fbfbfb;"></div>
<div style="left:789px;top:815px;width:1px;height:20px;background:#fbfbfb;"></div>
<div style="left:901px;top:815px;width:1px;height:20px;background:#fbfbfb;"></div>
<div style="left:1014px;top:795px;width:1px;height:40px;background:#fbfbfb;"></div>
<div style="left:1120px;top:795px;width:1px;height:40px;background:#fbfbfb;"></div>
<div style="left:1px;top:834px;width:1376px;height:1px;background:#d8d8d8;"></div>
<div class="t" style="top:801.00px;font-size:13px;line-height:13px;color:#000;white-space:pre;left:-161px;width:400px;text-align:center;">Node</div>
<div class="t" style="top:818.00px;font-size:13px;line-height:13px;color:#000;white-space:pre;left:-161px;width:400px;text-align:center;">No.</div>
<div class="t" style="top:818.00px;font-size:13px;line-height:13px;color:#000;white-space:pre;left:-36px;width:400px;text-align:center;">Node Type</div>
<div class="t" style="top:801.00px;font-size:13px;line-height:13px;color:#000;white-space:pre;left:114px;width:400px;text-align:center;">Reference</div>
<div class="t" style="top:818.00px;font-size:13px;line-height:13px;color:#000;white-space:pre;left:114px;width:400px;text-align:center;">Node</div>
<div class="t" style="top:801.00px;font-size:13px;line-height:13px;color:#000;white-space:pre;left:266px;width:400px;text-align:center;">Coordinate</div>
<div class="t" style="top:818.00px;font-size:13px;line-height:13px;color:#000;white-space:pre;left:266px;width:400px;text-align:center;">System</div>
<div class="t" style="top:801.00px;font-size:13px;line-height:13px;color:#000;white-space:pre;left:416px;width:400px;text-align:center;">Coordinate</div>
<div class="t" style="top:818.00px;font-size:13px;line-height:13px;color:#000;white-space:pre;left:416px;width:400px;text-align:center;">Type</div>
<div class="t" style="top:798.00px;font-size:13px;line-height:13px;color:#000;white-space:pre;left:645px;width:400px;text-align:center;">Coordinates</div>
<div class="t" style="top:818.00px;font-size:13px;line-height:13px;color:#000;white-space:pre;left:532px;width:400px;text-align:center;">X [m]</div>
<div class="t" style="top:818.00px;font-size:13px;line-height:13px;color:#000;white-space:pre;left:645px;width:400px;text-align:center;">Y [m]</div>
<div class="t" style="top:818.00px;font-size:13px;line-height:13px;color:#000;white-space:pre;left:757px;width:400px;text-align:center;">Z [m]</div>
<div class="t" style="top:818.00px;font-size:13px;line-height:13px;color:#000;white-space:pre;left:868px;width:400px;text-align:center;">Options</div>
<div class="t" style="top:818.00px;font-size:13px;line-height:13px;color:#000;white-space:pre;left:1048px;width:400px;text-align:center;">Comment</div>
<div style="left:1px;top:835px;width:1376px;height:160px;background:#ffffff;"></div>
<div style="left:1px;top:835px;width:75px;height:20px;background:#c8c8c8;"></div>
<div style="left:1px;top:854px;width:1376px;height:1px;background:#e4e4e4;"></div>
<div class="t" style="top:838.50px;font-size:13px;line-height:13px;color:#000;white-space:pre;left:-161px;width:400px;text-align:center;">1</div>
<div style="left:81px;top:837px;width:14px;height:14px;background:#ff5a0a;"></div>
<div class="t" style="top:838.50px;font-size:13px;line-height:13px;color:#000;white-space:pre;left:101px;">Standard</div>
<div class="t" style="top:838.50px;font-size:13px;line-height:13px;color:#000;white-space:pre;left:114px;width:400px;text-align:center;">--</div>
<div style="left:381px;top:837px;width:14px;height:14px;background:#ccffff;"></div>
<div class="t" style="top:838.50px;font-size:13px;line-height:13px;color:#000;white-space:pre;left:401px;">1 - Global XYZ</div>
<div class="t" style="top:838.50px;font-size:13px;line-height:13px;color:#000;white-space:pre;left:561px;">Cartesian</div>
<div class="t" style="top:838.50px;font-size:13px;line-height:13px;color:#000;white-space:pre;left:384px;width:400px;text-align:right;">0.000</div>
<div style="left:786px;top:832px;width:116px;height:24px;background:#0078d7;border:3px solid #7ac943;"></div>
<svg style="left:789px;top:835px;" width="6" height="6" viewBox="0 0 6 6"><path d="M0 0H6L0 6Z" fill="#e8e000"/></svg>
<div class="t" style="top:838.50px;font-size:13px;line-height:13px;color:#fff;white-space:pre;left:496px;width:400px;text-align:right;">-12.000</div>
<div class="t" style="top:838.50px;font-size:13px;line-height:13px;color:#000;white-space:pre;left:609px;width:400px;text-align:right;">-3.200</div>
<svg style="left:902px;top:835px;" width="5" height="5" viewBox="0 0 5 5"><path d="M0 0H5L0 5Z" fill="#e8e000"/></svg>
<div style="left:1px;top:855px;width:75px;height:20px;background:#e8e8e8;"></div>
<div style="left:1px;top:874px;width:1376px;height:1px;background:#e4e4e4;"></div>
<div class="t" style="top:858.50px;font-size:13px;line-height:13px;color:#000;white-space:pre;left:-161px;width:400px;text-align:center;">2</div>
<div style="left:81px;top:857px;width:14px;height:14px;background:#ff5a0a;"></div>
<div class="t" style="top:858.50px;font-size:13px;line-height:13px;color:#000;white-space:pre;left:101px;">Standard</div>
<div class="t" style="top:858.50px;font-size:13px;line-height:13px;color:#000;white-space:pre;left:114px;width:400px;text-align:center;">--</div>
<div style="left:381px;top:857px;width:14px;height:14px;background:#ccffff;"></div>
<div class="t" style="top:858.50px;font-size:13px;line-height:13px;color:#000;white-space:pre;left:401px;">1 - Global XYZ</div>
<div class="t" style="top:858.50px;font-size:13px;line-height:13px;color:#000;white-space:pre;left:561px;">Cartesian</div>
<div class="t" style="top:858.50px;font-size:13px;line-height:13px;color:#000;white-space:pre;left:384px;width:400px;text-align:right;">2.000</div>
<div class="t" style="top:858.50px;font-size:13px;line-height:13px;color:#000;white-space:pre;left:496px;width:400px;text-align:right;">-12.000</div>
<div class="t" style="top:858.50px;font-size:13px;line-height:13px;color:#000;white-space:pre;left:609px;width:400px;text-align:right;">-3.000</div>
<svg style="left:677px;top:855px;" width="5" height="5" viewBox="0 0 5 5"><path d="M0 0H5L0 5Z" fill="#e8e000"/></svg>
<svg style="left:790px;top:855px;" width="5" height="5" viewBox="0 0 5 5"><path d="M0 0H5L0 5Z" fill="#e8e000"/></svg>
<svg style="left:902px;top:855px;" width="5" height="5" viewBox="0 0 5 5"><path d="M0 0H5L0 5Z" fill="#e8e000"/></svg>
<div style="left:1px;top:875px;width:75px;height:20px;background:#e8e8e8;"></div>
<div style="left:1px;top:894px;width:1376px;height:1px;background:#e4e4e4;"></div>
<div class="t" style="top:878.50px;font-size:13px;line-height:13px;color:#000;white-space:pre;left:-161px;width:400px;text-align:center;">3</div>
<div style="left:81px;top:877px;width:14px;height:14px;background:#ff5a0a;"></div>
<div class="t" style="top:878.50px;font-size:13px;line-height:13px;color:#000;white-space:pre;left:101px;">Standard</div>
<div class="t" style="top:878.50px;font-size:13px;line-height:13px;color:#000;white-space:pre;left:114px;width:400px;text-align:center;">--</div>
<div style="left:381px;top:877px;width:14px;height:14px;background:#ccffff;"></div>
<div class="t" style="top:878.50px;font-size:13px;line-height:13px;color:#000;white-space:pre;left:401px;">1 - Global XYZ</div>
<div class="t" style="top:878.50px;font-size:13px;line-height:13px;color:#000;white-space:pre;left:561px;">Cartesian</div>
<div class="t" style="top:878.50px;font-size:13px;line-height:13px;color:#000;white-space:pre;left:384px;width:400px;text-align:right;">4.000</div>
<div class="t" style="top:878.50px;font-size:13px;line-height:13px;color:#000;white-space:pre;left:496px;width:400px;text-align:right;">-12.000</div>
<div class="t" style="top:878.50px;font-size:13px;line-height:13px;color:#000;white-space:pre;left:609px;width:400px;text-align:right;">-2.800</div>
<svg style="left:677px;top:875px;" width="5" height="5" viewBox="0 0 5 5"><path d="M0 0H5L0 5Z" fill="#e8e000"/></svg>
<svg style="left:790px;top:875px;" width="5" height="5" viewBox="0 0 5 5"><path d="M0 0H5L0 5Z" fill="#e8e000"/></svg>
<svg style="left:902px;top:875px;" width="5" height="5" viewBox="0 0 5 5"><path d="M0 0H5L0 5Z" fill="#e8e000"/></svg>
<div style="left:1px;top:895px;width:75px;height:20px;background:#e8e8e8;"></div>
<div style="left:1px;top:914px;width:1376px;height:1px;background:#e4e4e4;"></div>
<div class="t" style="top:898.50px;font-size:13px;line-height:13px;color:#000;white-space:pre;left:-161px;width:400px;text-align:center;">4</div>
<div style="left:81px;top:897px;width:14px;height:14px;background:#ff5a0a;"></div>
<div class="t" style="top:898.50px;font-size:13px;line-height:13px;color:#000;white-space:pre;left:101px;">Standard</div>
<div class="t" style="top:898.50px;font-size:13px;line-height:13px;color:#000;white-space:pre;left:114px;width:400px;text-align:center;">--</div>
<div style="left:381px;top:897px;width:14px;height:14px;background:#ccffff;"></div>
<div class="t" style="top:898.50px;font-size:13px;line-height:13px;color:#000;white-space:pre;left:401px;">1 - Global XYZ</div>
<div class="t" style="top:898.50px;font-size:13px;line-height:13px;color:#000;white-space:pre;left:561px;">Cartesian</div>
<div class="t" style="top:898.50px;font-size:13px;line-height:13px;color:#000;white-space:pre;left:384px;width:400px;text-align:right;">2.000</div>
<div class="t" style="top:898.50px;font-size:13px;line-height:13px;color:#000;white-space:pre;left:496px;width:400px;text-align:right;">-12.000</div>
<div class="t" style="top:898.50px;font-size:13px;line-height:13px;color:#000;white-space:pre;left:609px;width:400px;text-align:right;">0.000</div>
<svg style="left:677px;top:895px;" width="5" height="5" viewBox="0 0 5 5"><path d="M0 0H5L0 5Z" fill="#e8e000"/></svg>
<svg style="left:790px;top:895px;" width="5" height="5" viewBox="0 0 5 5"><path d="M0 0H5L0 5Z" fill="#e8e000"/></svg>
<svg style="left:1019px;top:897px;" width="14" height="15" viewBox="0 0 14 15"><path d="M7 7.500L13 13L7 14.5L0.8 13Z" fill="#38b858"/><path d="M7 7.500L13 13L7 14.5Z" fill="#48e070"/><circle cx="7" cy="6.600" r="2.500" fill="#107830"/><circle cx="7" cy="3" r="2.100" fill="#f01010"/></svg>
<div style="left:1px;top:915px;width:75px;height:20px;background:#e8e8e8;"></div>
<div style="left:1px;top:934px;width:1376px;height:1px;background:#e4e4e4;"></div>
<div class="t" style="top:918.50px;font-size:13px;line-height:13px;color:#000;white-space:pre;left:-161px;width:400px;text-align:center;">5</div>
<div style="left:81px;top:917px;width:14px;height:14px;background:#ff5a0a;"></div>
<div class="t" style="top:918.50px;font-size:13px;line-height:13px;color:#000;white-space:pre;left:101px;">Standard</div>
<div class="t" style="top:918.50px;font-size:13px;line-height:13px;color:#000;white-space:pre;left:114px;width:400px;text-align:center;">--</div>
<div style="left:381px;top:917px;width:14px;height:14px;background:#ccffff;"></div>
<div class="t" style="top:918.50px;font-size:13px;line-height:13px;color:#000;white-space:pre;left:401px;">1 - Global XYZ</div>
<div class="t" style="top:918.50px;font-size:13px;line-height:13px;color:#000;white-space:pre;left:561px;">Cartesian</div>
<div class="t" style="top:918.50px;font-size:13px;line-height:13px;color:#000;white-space:pre;left:384px;width:400px;text-align:right;">0.000</div>
<div class="t" style="top:918.50px;font-size:13px;line-height:13px;color:#000;white-space:pre;left:496px;width:400px;text-align:right;">-8.000</div>
<div class="t" style="top:918.50px;font-size:13px;line-height:13px;color:#000;white-space:pre;left:609px;width:400px;text-align:right;">-3.200</div>
<svg style="left:790px;top:915px;" width="5" height="5" viewBox="0 0 5 5"><path d="M0 0H5L0 5Z" fill="#e8e000"/></svg>
<svg style="left:902px;top:915px;" width="5" height="5" viewBox="0 0 5 5"><path d="M0 0H5L0 5Z" fill="#e8e000"/></svg>
<div style="left:1px;top:935px;width:75px;height:20px;background:#e8e8e8;"></div>
<div style="left:1px;top:954px;width:1376px;height:1px;background:#e4e4e4;"></div>
<div class="t" style="top:938.50px;font-size:13px;line-height:13px;color:#000;white-space:pre;left:-161px;width:400px;text-align:center;">6</div>
<div style="left:81px;top:937px;width:14px;height:14px;background:#ff5a0a;"></div>
<div class="t" style="top:938.50px;font-size:13px;line-height:13px;color:#000;white-space:pre;left:101px;">Standard</div>
<div class="t" style="top:938.50px;font-size:13px;line-height:13px;color:#000;white-space:pre;left:114px;width:400px;text-align:center;">--</div>
<div style="left:381px;top:937px;width:14px;height:14px;background:#ccffff;"></div>
<div class="t" style="top:938.50px;font-size:13px;line-height:13px;color:#000;white-space:pre;left:401px;">1 - Global XYZ</div>
<div class="t" style="top:938.50px;font-size:13px;line-height:13px;color:#000;white-space:pre;left:561px;">Cartesian</div>
<div class="t" style="top:938.50px;font-size:13px;line-height:13px;color:#000;white-space:pre;left:384px;width:400px;text-align:right;">2.000</div>
<div class="t" style="top:938.50px;font-size:13px;line-height:13px;color:#000;white-space:pre;left:496px;width:400px;text-align:right;">-8.000</div>
<div class="t" style="top:938.50px;font-size:13px;line-height:13px;color:#000;white-space:pre;left:609px;width:400px;text-align:right;">-3.000</div>
<svg style="left:677px;top:935px;" width="5" height="5" viewBox="0 0 5 5"><path d="M0 0H5L0 5Z" fill="#e8e000"/></svg>
<svg style="left:790px;top:935px;" width="5" height="5" viewBox="0 0 5 5"><path d="M0 0H5L0 5Z" fill="#e8e000"/></svg>
<svg style="left:902px;top:935px;" width="5" height="5" viewBox="0 0 5 5"><path d="M0 0H5L0 5Z" fill="#e8e000"/></svg>
<div style="left:1px;top:955px;width:75px;height:20px;background:#e8e8e8;"></div>
<div style="left:1px;top:974px;width:1376px;height:1px;background:#e4e4e4;"></div>
<div class="t" style="top:958.50px;font-size:13px;line-height:13px;color:#000;white-space:pre;left:-161px;width:400px;text-align:center;">7</div>
<div style="left:81px;top:957px;width:14px;height:14px;background:#ff5a0a;"></div>
<div class="t" style="top:958.50px;font-size:13px;line-height:13px;color:#000;white-space:pre;left:101px;">Standard</div>
<div class="t" style="top:958.50px;font-size:13px;line-height:13px;color:#000;white-space:pre;left:114px;width:400px;text-align:center;">--</div>
<div style="left:381px;top:957px;width:14px;height:14px;background:#ccffff;"></div>
<div class="t" style="top:958.50px;font-size:13px;line-height:13px;color:#000;white-space:pre;left:401px;">1 - Global XYZ</div>
<div class="t" style="top:958.50px;font-size:13px;line-height:13px;color:#000;white-space:pre;left:561px;">Cartesian</div>
<div class="t" style="top:958.50px;font-size:13px;line-height:13px;color:#000;white-space:pre;left:384px;width:400px;text-align:right;">4.000</div>
<div class="t" style="top:958.50px;font-size:13px;line-height:13px;color:#000;white-space:pre;left:496px;width:400px;text-align:right;">-8.000</div>
<div class="t" style="top:958.50px;font-size:13px;line-height:13px;color:#000;white-space:pre;left:609px;width:400px;text-align:right;">-2.800</div>
<svg style="left:677px;top:955px;" width="5" height="5" viewBox="0 0 5 5"><path d="M0 0H5L0 5Z" fill="#e8e000"/></svg>
<svg style="left:790px;top:955px;" width="5" height="5" viewBox="0 0 5 5"><path d="M0 0H5L0 5Z" fill="#e8e000"/></svg>
<svg style="left:902px;top:955px;" width="5" height="5" viewBox="0 0 5 5"><path d="M0 0H5L0 5Z" fill="#e8e000"/></svg>
<div style="left:1px;top:975px;width:75px;height:20px;background:#e8e8e8;"></div>
<div style="left:1px;top:994px;width:1376px;height:1px;background:#e4e4e4;"></div>
<div class="t" style="top:978.50px;font-size:13px;line-height:13px;color:#000;white-space:pre;left:-161px;width:400px;text-align:center;">8</div>
<div style="left:81px;top:977px;width:14px;height:14px;background:#ff5a0a;"></div>
<div class="t" style="top:978.50px;font-size:13px;line-height:13px;color:#000;white-space:pre;left:101px;">Standard</div>
<div class="t" style="top:978.50px;font-size:13px;line-height:13px;color:#000;white-space:pre;left:114px;width:400px;text-align:center;">--</div>
<div style="left:381px;top:977px;width:14px;height:14px;background:#ccffff;"></div>
<div class="t" style="top:978.50px;font-size:13px;line-height:13px;color:#000;white-space:pre;left:401px;">1 - Global XYZ</div>
<div class="t" style="top:978.50px;font-size:13px;line-height:13px;color:#000;white-space:pre;left:561px;">Cartesian</div>
<div class="t" style="top:978.50px;font-size:13px;line-height:13px;color:#000;white-space:pre;left:384px;width:400px;text-align:right;">2.000</div>
<div class="t" style="top:978.50px;font-size:13px;line-height:13px;color:#000;white-space:pre;left:496px;width:400px;text-align:right;">-8.000</div>
<div class="t" style="top:978.50px;font-size:13px;line-height:13px;color:#000;white-space:pre;left:609px;width:400px;text-align:right;">0.000</div>
<svg style="left:677px;top:975px;" width="5" height="5" viewBox="0 0 5 5"><path d="M0 0H5L0 5Z" fill="#e8e000"/></svg>
<svg style="left:790px;top:975px;" width="5" height="5" viewBox="0 0 5 5"><path d="M0 0H5L0 5Z" fill="#e8e000"/></svg>
<svg style="left:1019px;top:977px;" width="14" height="15" viewBox="0 0 14 15"><path d="M7 7.500L13 13L7 14.5L0.8 13Z" fill="#38b858"/><path d="M7 7.500L13 13L7 14.5Z" fill="#48e070"/><circle cx="7" cy="6.600" r="2.500" fill="#107830"/><circle cx="7" cy="3" r="2.100" fill="#f01010"/></svg>
<div style="left:76px;top:835px;width:1px;height:160px;background:#e4e4e4;"></div>
<div style="left:251px;top:835px;width:1px;height:160px;background:#e4e4e4;"></div>
<div style="left:376px;top:835px;width:1px;height:160px;background:#e4e4e4;"></div>
<div style="left:556px;top:835px;width:1px;height:160px;background:#e4e4e4;"></div>
<div style="left:676px;top:835px;width:1px;height:160px;background:#e4e4e4;"></div>
<div style="left:789px;top:835px;width:1px;height:160px;background:#e4e4e4;"></div>
<div style="left:901px;top:835px;width:1px;height:160px;background:#e4e4e4;"></div>
<div style="left:1014px;top:835px;width:1px;height:160px;background:#e4e4e4;"></div>
<div style="left:1120px;top:835px;width:1px;height:160px;background:#e4e4e4;"></div>
<div style="left:76px;top:835px;width:1px;height:160px;background:#f4f4f4;"></div>
<div style="left:1377px;top:782px;width:21px;height:213px;background:#f0f0f0;"></div>
<svg style="left:1381px;top:788px;" width="13" height="8" viewBox="0 0 13 8"><path d="M1 7L6.5 1.5L12 7" stroke="#444" stroke-width="1.6" fill="none"/></svg>
<svg style="left:1381px;top:981px;" width="13" height="8" viewBox="0 0 13 8"><path d="M1 1L6.5 6.5L12 1" stroke="#444" stroke-width="1.6" fill="none"/></svg>
<div style="left:1379px;top:804px;width:18px;height:24px;background:#cdcdcd;"></div>
<div style="left:0px;top:994px;width:1400px;height:1px;background:#d0d0d0;"></div>
<div style="left:0px;top:995px;width:1400px;height:28px;background:#f8f8f8;"></div>
<svg style="left:7px;top:1003px;" width="11" height="11" viewBox="0 0 11 11"><path d="M1 0V11" stroke="#444" stroke-width="2"/><path d="M10 0.5V10.5L3 5.5Z" fill="#444"/></svg>
<svg style="left:30px;top:1003px;" width="8" height="11" viewBox="0 0 8 11"><path d="M7.5 0.5V10.5L0.5 5.5Z" fill="#444"/></svg>
<div class="t" style="top:1002.50px;font-size:13px;line-height:13px;color:#000;white-space:pre;left:-124px;width:400px;text-align:center;">4 of 14</div>
<svg style="left:118px;top:1003px;" width="8" height="11" viewBox="0 0 8 11"><path d="M0.5 0.5V10.5L7.5 5.5Z" fill="#444"/></svg>
<svg style="left:137px;top:1003px;" width="11" height="11" viewBox="0 0 11 11"><path d="M10 0V11" stroke="#444" stroke-width="2"/><path d="M1 0.5V10.5L8 5.5Z" fill="#444"/></svg>
<div style="left:154px;top:995px;width:69px;height:25px;background:#ececec;border:1px solid #d0d0d8;border-top:none;"></div>
<div class="t" style="top:1002.00px;font-size:13px;line-height:13px;color:#000;white-space:pre;left:-11.5px;width:400px;text-align:center;">Materials</div>
<div style="left:224px;top:995px;width:63px;height:25px;background:#ececec;border:1px solid #d0d0d8;border-top:none;"></div>
<div class="t" style="top:1002.00px;font-size:13px;line-height:13px;color:#000;white-space:pre;left:55.5px;width:400px;text-align:center;">Sections</div>
<div style="left:288px;top:995px;width:83px;height:25px;background:#ececec;border:1px solid #d0d0d8;border-top:none;"></div>
<div class="t" style="top:1002.00px;font-size:13px;line-height:13px;color:#000;white-space:pre;left:129.5px;width:400px;text-align:center;">Thicknesses</div>
<div style="left:371px;top:994px;width:63px;height:28px;background:#ffffff;border:1px solid #d6d6d6;border-top:none;"></div>
<div class="t" style="top:1003.50px;font-size:13px;line-height:13px;color:#000;white-space:pre;left:202.5px;width:400px;text-align:center;">Nodes</div>
<div style="left:434px;top:995px;width:60px;height:25px;background:#ececec;border:1px solid #d0d0d8;border-top:none;"></div>
<div class="t" style="top:1002.00px;font-size:13px;line-height:13px;color:#000;white-space:pre;left:264.0px;width:400px;text-align:center;">Lines</div>
<div style="left:495px;top:995px;width:71px;height:25px;background:#ececec;border:1px solid #d0d0d8;border-top:none;"></div>
<div class="t" style="top:1002.00px;font-size:13px;line-height:13px;color:#000;white-space:pre;left:330.5px;width:400px;text-align:center;">Members</div>
<div style="left:567px;top:995px;width:65px;height:25px;background:#ececec;border:1px solid #d0d0d8;border-top:none;"></div>
<div class="t" style="top:1002.00px;font-size:13px;line-height:13px;color:#000;white-space:pre;left:399.5px;width:400px;text-align:center;">Surfaces</div>
<div style="left:633px;top:995px;width:70px;height:25px;background:#ececec;border:1px solid #d0d0d8;border-top:none;"></div>
<div class="t" style="top:1002.00px;font-size:13px;line-height:13px;color:#000;white-space:pre;left:468.0px;width:400px;text-align:center;">Openings</div>
<div style="left:704px;top:995px;width:60px;height:25px;background:#ececec;border:1px solid #d0d0d8;border-top:none;"></div>
<div class="t" style="top:1002.00px;font-size:13px;line-height:13px;color:#000;white-space:pre;left:534.0px;width:400px;text-align:center;">Solids</div>
<div style="left:765px;top:995px;width:66px;height:25px;background:#ececec;border:1px solid #d0d0d8;border-top:none;"></div>
<div class="t" style="top:1002.00px;font-size:13px;line-height:13px;color:#000;white-space:pre;left:598.0px;width:400px;text-align:center;">Line Sets</div>
<div style="left:832px;top:995px;width:93px;height:25px;background:#ececec;border:1px solid #d0d0d8;border-top:none;"></div>
<div class="t" style="top:1002.00px;font-size:13px;line-height:13px;color:#000;white-space:pre;left:678.5px;width:400px;text-align:center;">Member Sets</div>
<div style="left:926px;top:995px;width:86px;height:25px;background:#ececec;border:1px solid #d0d0d8;border-top:none;"></div>
<div class="t" style="top:1002.00px;font-size:13px;line-height:13px;color:#000;white-space:pre;left:769.0px;width:400px;text-align:center;">Surface Sets</div>
<div style="left:1013px;top:995px;width:72px;height:25px;background:#ececec;border:1px solid #d0d0d8;border-top:none;"></div>
<div class="t" style="top:1002.00px;font-size:13px;line-height:13px;color:#000;white-space:pre;left:849.0px;width:400px;text-align:center;">Solid Sets</div>
<div style="left:1086px;top:995px;width:69px;height:25px;background:#ececec;border:1px solid #d0d0d8;border-top:none;"></div>
<div class="t" style="top:1002.00px;font-size:13px;line-height:13px;color:#000;white-space:pre;left:920.5px;width:400px;text-align:center;">Formulas</div>
<div style="left:0px;top:1023px;width:1400px;height:27px;background:#f8f8f8;"></div>
<div style="left:406px;top:1025px;width:41px;height:24px;background:#ededed;border:1px solid #d8d8d8;"></div>
<div class="t" style="top:1031.59px;font-size:12.3px;line-height:12.3px;color:#000;white-space:pre;left:226.5px;width:400px;text-align:center;">SNAP</div>
<div style="left:449px;top:1025px;width:39px;height:24px;background:#ededed;border:1px solid #d8d8d8;"></div>
<div class="t" style="top:1031.59px;font-size:12.3px;line-height:12.3px;color:#000;white-space:pre;left:268.5px;width:400px;text-align:center;">GRID</div>
<div style="left:490px;top:1025px;width:46px;height:24px;background:#ededed;border:1px solid #d8d8d8;"></div>
<div class="t" style="top:1031.59px;font-size:12.3px;line-height:12.3px;color:#000;white-space:pre;left:313.0px;width:400px;text-align:center;">LGRID</div>
<div style="left:537px;top:1025px;width:52px;height:24px;background:#ededed;border:1px solid #d8d8d8;"></div>
<div class="t" style="top:1031.59px;font-size:12.3px;line-height:12.3px;color:#000;white-space:pre;left:363.0px;width:400px;text-align:center;">OSNAP</div>
<div style="left:691px;top:1026px;width:1px;height:20px;background:#d8d8d8;"></div>
<div style="left:822px;top:1026px;width:1px;height:20px;background:#d8d8d8;"></div>
<div style="left:1016px;top:1026px;width:1px;height:20px;background:#d8d8d8;"></div>
<div style="left:1097px;top:1026px;width:1px;height:20px;background:#d8d8d8;"></div>
<div style="left:1191px;top:1026px;width:1px;height:20px;background:#d8d8d8;"></div>
<div style="left:1285px;top:1026px;width:1px;height:20px;background:#d8d8d8;"></div>
<div style="left:1379px;top:1026px;width:1px;height:20px;background:#d8d8d8;"></div>
<div class="t" style="top:1031.42px;font-size:12.5px;line-height:12.5px;color:#000;white-space:pre;left:827px;">CS: Global XYZ</div>
<div class="t" style="top:1031.42px;font-size:12.5px;line-height:12.5px;color:#000;white-space:pre;left:1021px;">Plane: XY</div>
<svg style="left:1386px;top:1037px;" width="10" height="10" viewBox="0 0 10 10"><rect x="7" y="1" width="2" height="2" fill="#aaa"/><rect x="4" y="4" width="2" height="2" fill="#aaa"/><rect x="7" y="4" width="2" height="2" fill="#aaa"/><rect x="1" y="7" width="2" height="2" fill="#aaa"/><rect x="4" y="7" width="2" height="2" fill="#aaa"/><rect x="7" y="7" width="2" height="2" fill="#aaa"/></svg>
<div style="left:605px;top:277px;width:755px;height:418px;box-shadow:0 4px 16px 0 rgba(0,0,0,0.34);"></div>
<div style="left:605px;top:277px;width:755px;height:418px;background:#79c943;"></div>
<div style="left:608px;top:280px;width:749px;height:412px;background:#ffffff;"></div>
<div class="t" style="top:291.23px;font-size:14.5px;line-height:14.5px;color:#000;white-space:pre;left:641px;">Edit Formula</div>
<svg style="left:1200px;top:288px;" width="140" height="20" viewBox="0 0 140 20"><path d="M4.5 9.5H16.5" stroke="#c8c8c8" stroke-width="1"/><rect x="62.5" y="4.5" width="11" height="11" stroke="#000" fill="none" stroke-width="1.2"/><path d="M121.5 4.5L132.5 15.5M132.5 4.5L121.5 15.5" stroke="#000" stroke-width="1.2" fill="none"/></svg>
<div style="left:608px;top:317px;width:749px;height:324px;background:#d0d0d6;"></div>
<div style="left:618px;top:328px;width:728px;height:303px;background:#ffffff;"></div>
<div class="t" style="top:343.92px;font-size:12.5px;line-height:12.5px;color:#000;white-space:pre;left:624.5px;">Formula</div>
<div style="left:624px;top:364px;width:716px;height:142px;background:#ffffff;border:1px solid #0078d7;"></div>
<div style="left:629px;top:369px;width:1px;height:17px;background:#000;"></div>
<div class="t" style="top:372.84px;font-size:12px;line-height:12px;color:#000;white-space:pre;letter-spacing:-0.4px;left:630px;">-L_1-L_2-L_3</div>
<div style="left:624px;top:512px;width:29px;height:24px;background:#cce4f7;"></div>
<svg style="left:630px;top:516px;" width="16" height="16" viewBox="0 0 16 16"><path d="M2.5 2.5L13.5 13.5M13.5 2.5L2.5 13.5" stroke="#f00000" stroke-width="3.2" stroke-linecap="round"/></svg>
<div style="left:1278px;top:512px;width:29px;height:24px;background:#cce4f7;"></div>
<div style="left:1311px;top:512px;width:29px;height:24px;background:#cce4f7;"></div>
<svg style="left:1311px;top:512px;" width="29" height="24" viewBox="0 0 29 24"><circle cx="14" cy="12" r="9.3" fill="#0000ff"/><circle cx="14" cy="6.4" r="1.8" fill="#fff"/><path d="M11.2 9.6H15.6V16.6H17V18.2H11V16.6H12.6V11.2H11.2Z" fill="#fff"/></svg>
<svg style="left:1278px;top:512px;" width="29" height="24" viewBox="0 0 29 24"><rect x="12.8" y="2.2" width="7.2" height="8.3" fill="#f4f4f4"/><path d="M13.4 2.2V10H20" stroke="#666" stroke-width="1.4" fill="none"/><rect x="12.8" y="2" width="7.4" height="2.4" fill="#28308a"/><rect x="12.8" y="2" width="2.4" height="2.4" fill="#9a9aa8"/><text x="4" y="20.4" font-size="12.5" font-style="italic" font-weight="bold" font-family="Liberation Serif,serif" fill="#222">ab</text><path d="M17.8 16.6h2.4M17.8 19.2h2.4" stroke="#555" stroke-width="1"/></svg>
<div class="t" style="top:559.92px;font-size:12.5px;line-height:12.5px;color:#000;white-space:pre;left:624.5px;">Result</div>
<div style="left:624px;top:580px;width:113px;height:23px;background:#e4e4e4;"></div>
<div class="t" style="top:586.42px;font-size:12.5px;line-height:12.5px;color:#000;white-space:pre;left:284px;width:400px;text-align:right;">-12.000</div>
<svg style="left:691px;top:589px;" width="13" height="8" viewBox="0 0 13 8"><path d="M1 1L6.5 6.5L12 1" stroke="#b4b4b4" stroke-width="1.1" fill="none"/></svg>
<svg style="left:712px;top:585px;" width="8" height="16" viewBox="0 0 8 16"><path d="M1.5 3.5L4 1L6.5 3.5Z M1.5 12.5L4 15L6.5 12.5Z" fill="#a8a8a8"/></svg>
<svg style="left:727px;top:586px;" width="6" height="11" viewBox="0 0 6 11"><path d="M0 0.5V10.5L5.5 5.5Z" fill="#a0a0a0"/></svg>
<div class="t" style="top:586.42px;font-size:12.5px;line-height:12.5px;color:#000;white-space:pre;left:743px;">[m]</div>
<div style="left:1018px;top:654px;width:101px;height:26px;background:#e1e1e1;border:2px solid #0078d7;"></div>
<div class="t" style="top:661.50px;font-size:13px;line-height:13px;color:#000;white-space:pre;left:868.5px;width:400px;text-align:center;">OK</div>
<div style="left:1131px;top:654px;width:101px;height:26px;background:#e1e1e1;border:1px solid #adadad;"></div>
<div class="t" style="top:661.50px;font-size:13px;line-height:13px;color:#000;white-space:pre;left:981.5px;width:400px;text-align:center;">Cancel</div>
<div style="left:1244px;top:654px;width:101px;height:26px;background:#cccccc;border:1px solid #bfbfbf;"></div>
<div class="t" style="top:661.50px;font-size:13px;line-height:13px;color:#838383;white-space:pre;left:1094.5px;width:400px;text-align:center;">Apply</div>
<svg style="left:1343px;top:679px;" width="12" height="12" viewBox="0 0 12 12"><rect x="8" y="0.3" width="2.6" height="2.6" fill="#adadad"/><rect x="4" y="4.3" width="2.6" height="2.6" fill="#adadad"/><rect x="8" y="4.3" width="2.6" height="2.6" fill="#adadad"/><rect x="1" y="8.3" width="2.6" height="2.6" fill="#adadad"/><rect x="4" y="8.3" width="2.6" height="2.6" fill="#adadad"/><rect x="8" y="8.3" width="2.6" height="2.6" fill="#adadad"/></svg>
<svg style="left:8px;top:754px;" width="18" height="18" viewBox="0 0 21 21"><rect x="0.8" y="0.8" width="19.4" height="19.4" fill="#a8a8a8" stroke="#555" stroke-width="1.4"/><rect x="1.5" y="1.5" width="18" height="3.2" fill="#3a48b8"/><path d="M1.5 8.500H19.5M1.5 12.5H19.5M7 5V19.5M13 5V19.5" stroke="#e0e0e0" stroke-width="0.9"/><path d="M3.500 18.5L18.5 6V18.5Z" fill="#98f098" stroke="#48a048" stroke-width="1"/><path d="M10.5 16L15.5 11.5V16Z" fill="#a8a8a8" stroke="#48a048" stroke-width="0.8"/></svg>
<svg style="left:306px;top:752px;" width="24" height="24" viewBox="0 0 24 24"><path d="M3 20.5L19 3" stroke="#6a88c8" stroke-width="3.8"/><path d="M3 20.5L19 3" stroke="#c8dcf4" stroke-width="2"/><circle cx="3" cy="20.5" r="1.8" fill="#e81010" stroke="#a00000" stroke-width="0.4"/><circle cx="19" cy="3" r="1.8" fill="#e81010" stroke="#a00000" stroke-width="0.4"/><path d="M14 16H21M14 21.5H21M17.5 16V21.5" stroke="#555" stroke-width="1.6"/></svg>
<svg style="left:688px;top:752px;" width="24" height="24" viewBox="0 0 24 24"><rect x="7.500" y="1.5" width="11" height="7" fill="#e8e8e8" stroke="#666" stroke-width="1.2"/><path d="M14 22Q22 16 13.5 9.500" stroke="#3a68b8" stroke-width="2.4" fill="none"/><path d="M10.5 7.500L17 8.500L12.5 13.5Z" fill="#3a68b8"/></svg>
<svg style="left:716px;top:752px;" width="24" height="24" viewBox="0 0 24 24"><rect x="9.500" y="1" width="10" height="7" fill="#e8e8e8" stroke="#777" stroke-width="1.1"/><path d="M12 3.500Q4 8 9 17.5" stroke="#3a68b8" stroke-width="2.2" fill="none"/><path d="M6 15.5L12.5 16L9.500 21.5Z" fill="#3a68b8"/></svg>
<svg style="left:758px;top:753px;" width="23" height="23" viewBox="0 0 23 23"><rect x="0.7" y="0.7" width="21.6" height="20.6" fill="#d8d8d8" stroke="#999" stroke-width="1.2"/><rect x="2.0" y="2.5" width="5.600" height="2.100" fill="#888"/><rect x="8.6" y="2.5" width="5.600" height="2.100" fill="#888"/><rect x="15.2" y="2.5" width="5.600" height="2.100" fill="#888"/><rect x="2.0" y="5.6" width="5.600" height="2.100" fill="#888"/><rect x="8.6" y="5.6" width="5.600" height="2.100" fill="#888"/><rect x="15.2" y="5.6" width="5.600" height="2.100" fill="#888"/><rect x="2.0" y="8.7" width="5.600" height="2.100" fill="#888"/><rect x="8.6" y="8.7" width="5.600" height="2.100" fill="#888"/><rect x="15.2" y="8.7" width="5.600" height="2.100" fill="#888"/><rect x="2.0" y="11.8" width="5.600" height="2.100" fill="#888"/><rect x="8.6" y="11.8" width="5.600" height="2.100" fill="#888"/><rect x="15.2" y="11.8" width="5.600" height="2.100" fill="#888"/><rect x="2.0" y="14.9" width="5.600" height="2.100" fill="#bbb"/><rect x="8.6" y="14.9" width="5.600" height="2.100" fill="#bbb"/><rect x="15.2" y="14.9" width="5.600" height="2.100" fill="#bbb"/><rect x="2.0" y="18.0" width="5.600" height="2.100" fill="#bbb"/><rect x="8.6" y="18.0" width="5.600" height="2.100" fill="#bbb"/><rect x="15.2" y="18.0" width="5.600" height="2.100" fill="#bbb"/></svg>
<svg style="left:789px;top:753px;" width="23" height="23" viewBox="0 0 23 23"><rect x="0.7" y="8.700" width="21.6" height="12.6" fill="#f4f4f4" stroke="#bbb" stroke-width="1.1"/><path d="M1 13H22M1 17H22M8 9V21M15 9V21" stroke="#ccc" stroke-width="0.9"/><path d="M4.500 2.500L17.5 6" stroke="#bbb" stroke-width="1.2"/><circle cx="4.500" cy="2.500" r="1.8" fill="#c4c4c4"/><circle cx="17.5" cy="6" r="1.8" fill="#c4c4c4"/></svg>
<svg style="left:820px;top:753px;" width="23" height="23" viewBox="0 0 23 23"><rect x="0.8" y="0.8" width="21.4" height="20.4" fill="#b0b0b0" stroke="#666" stroke-width="1.6"/><rect x="2.4" y="2.4" width="3.800" height="2.600" fill="#d8d8d8"/><rect x="7.2" y="2.4" width="3.800" height="2.600" fill="#d8d8d8"/><rect x="12.0" y="2.4" width="3.800" height="2.600" fill="#d8d8d8"/><rect x="16.8" y="2.4" width="3.800" height="2.600" fill="#d8d8d8"/><rect x="2.4" y="6.1" width="3.800" height="2.600" fill="#d8d8d8"/><rect x="7.2" y="6.1" width="3.800" height="2.600" fill="#d8d8d8"/><rect x="12.0" y="6.1" width="3.800" height="2.600" fill="#d8d8d8"/><rect x="16.8" y="6.1" width="3.800" height="2.600" fill="#d8d8d8"/><rect x="2.4" y="9.8" width="3.800" height="2.600" fill="#d8d8d8"/><rect x="7.2" y="9.8" width="3.800" height="2.600" fill="#d8d8d8"/><rect x="12.0" y="9.8" width="3.800" height="2.600" fill="#d8d8d8"/><rect x="16.8" y="9.8" width="3.800" height="2.600" fill="#d8d8d8"/><rect x="2.4" y="13.5" width="3.800" height="2.600" fill="#d8d8d8"/><rect x="7.2" y="13.5" width="3.800" height="2.600" fill="#d8d8d8"/><rect x="12.0" y="13.5" width="3.800" height="2.600" fill="#d8d8d8"/><rect x="16.8" y="13.5" width="3.800" height="2.600" fill="#d8d8d8"/><rect x="2.4" y="17.2" width="3.800" height="2.600" fill="#d8d8d8"/><rect x="7.2" y="17.2" width="3.800" height="2.600" fill="#d8d8d8"/><rect x="12.0" y="17.2" width="3.800" height="2.600" fill="#d8d8d8"/><rect x="16.8" y="17.2" width="3.800" height="2.600" fill="#d8d8d8"/><path d="M11.5 4V18M4.500 11H18.5" stroke="#7a98f0" stroke-width="4.800"/></svg>
<svg style="left:851px;top:753px;" width="23" height="23" viewBox="0 0 23 23"><rect x="0.8" y="0.8" width="21.4" height="20.4" fill="#b0b0b0" stroke="#666" stroke-width="1.6"/><rect x="2.4" y="2.4" width="3.800" height="2.600" fill="#d8d8d8"/><rect x="7.2" y="2.4" width="3.800" height="2.600" fill="#d8d8d8"/><rect x="12.0" y="2.4" width="3.800" height="2.600" fill="#d8d8d8"/><rect x="16.8" y="2.4" width="3.800" height="2.600" fill="#d8d8d8"/><rect x="2.4" y="6.1" width="3.800" height="2.600" fill="#d8d8d8"/><rect x="7.2" y="6.1" width="3.800" height="2.600" fill="#d8d8d8"/><rect x="12.0" y="6.1" width="3.800" height="2.600" fill="#d8d8d8"/><rect x="16.8" y="6.1" width="3.800" height="2.600" fill="#d8d8d8"/><rect x="2.4" y="9.8" width="3.800" height="2.600" fill="#d8d8d8"/><rect x="7.2" y="9.8" width="3.800" height="2.600" fill="#d8d8d8"/><rect x="12.0" y="9.8" width="3.800" height="2.600" fill="#d8d8d8"/><rect x="16.8" y="9.8" width="3.800" height="2.600" fill="#d8d8d8"/><rect x="2.4" y="13.5" width="3.800" height="2.600" fill="#d8d8d8"/><rect x="7.2" y="13.5" width="3.800" height="2.600" fill="#d8d8d8"/><rect x="12.0" y="13.5" width="3.800" height="2.600" fill="#d8d8d8"/><rect x="16.8" y="13.5" width="3.800" height="2.600" fill="#d8d8d8"/><rect x="2.4" y="17.2" width="3.800" height="2.600" fill="#d8d8d8"/><rect x="7.2" y="17.2" width="3.800" height="2.600" fill="#d8d8d8"/><rect x="12.0" y="17.2" width="3.800" height="2.600" fill="#d8d8d8"/><rect x="16.8" y="17.2" width="3.800" height="2.600" fill="#d8d8d8"/><path d="M6 5.500L17 16.5M17 5.500L6 16.5" stroke="#7a98f0" stroke-width="4.600"/></svg>
<svg style="left:882px;top:753px;" width="23" height="23" viewBox="0 0 23 23"><rect x="0.8" y="0.8" width="21.4" height="20.4" fill="#b0b0b0" stroke="#666" stroke-width="1.6"/><rect x="2.4" y="2.4" width="3.800" height="2.600" fill="#d8d8d8"/><rect x="7.2" y="2.4" width="3.800" height="2.600" fill="#d8d8d8"/><rect x="12.0" y="2.4" width="3.800" height="2.600" fill="#d8d8d8"/><rect x="16.8" y="2.4" width="3.800" height="2.600" fill="#d8d8d8"/><rect x="2.4" y="6.1" width="3.800" height="2.600" fill="#d8d8d8"/><rect x="7.2" y="6.1" width="3.800" height="2.600" fill="#d8d8d8"/><rect x="12.0" y="6.1" width="3.800" height="2.600" fill="#d8d8d8"/><rect x="16.8" y="6.1" width="3.800" height="2.600" fill="#d8d8d8"/><rect x="2.4" y="9.8" width="3.800" height="2.600" fill="#d8d8d8"/><rect x="7.2" y="9.8" width="3.800" height="2.600" fill="#d8d8d8"/><rect x="12.0" y="9.8" width="3.800" height="2.600" fill="#d8d8d8"/><rect x="16.8" y="9.8" width="3.800" height="2.600" fill="#d8d8d8"/><rect x="2.4" y="13.5" width="3.800" height="2.600" fill="#d8d8d8"/><rect x="7.2" y="13.5" width="3.800" height="2.600" fill="#d8d8d8"/><rect x="12.0" y="13.5" width="3.800" height="2.600" fill="#d8d8d8"/><rect x="16.8" y="13.5" width="3.800" height="2.600" fill="#d8d8d8"/><rect x="2.4" y="17.2" width="3.800" height="2.600" fill="#d8d8d8"/><rect x="7.2" y="17.2" width="3.800" height="2.600" fill="#d8d8d8"/><rect x="12.0" y="17.2" width="3.800" height="2.600" fill="#d8d8d8"/><rect x="16.8" y="17.2" width="3.800" height="2.600" fill="#d8d8d8"/><circle cx="11.5" cy="6.500" r="2.800" fill="#6a88e8"/><circle cx="11.5" cy="15.5" r="2.800" fill="#6a88e8"/></svg>
<svg style="left:921px;top:753px;" width="23" height="23" viewBox="0 0 23 23"><rect x="0.8" y="0.8" width="21.4" height="20.4" fill="#b0b0b0" stroke="#666" stroke-width="1.6"/><rect x="2.4" y="2.4" width="3.800" height="2.600" fill="#d8d8d8"/><rect x="7.2" y="2.4" width="3.800" height="2.600" fill="#d8d8d8"/><rect x="12.0" y="2.4" width="3.800" height="2.600" fill="#d8d8d8"/><rect x="16.8" y="2.4" width="3.800" height="2.600" fill="#d8d8d8"/><rect x="2.4" y="6.1" width="3.800" height="2.600" fill="#d8d8d8"/><rect x="7.2" y="6.1" width="3.800" height="2.600" fill="#d8d8d8"/><rect x="12.0" y="6.1" width="3.800" height="2.600" fill="#d8d8d8"/><rect x="16.8" y="6.1" width="3.800" height="2.600" fill="#d8d8d8"/><rect x="2.4" y="9.8" width="3.800" height="2.600" fill="#d8d8d8"/><rect x="7.2" y="9.8" width="3.800" height="2.600" fill="#d8d8d8"/><rect x="12.0" y="9.8" width="3.800" height="2.600" fill="#d8d8d8"/><rect x="16.8" y="9.8" width="3.800" height="2.600" fill="#d8d8d8"/><rect x="2.4" y="13.5" width="3.800" height="2.600" fill="#d8d8d8"/><rect x="7.2" y="13.5" width="3.800" height="2.600" fill="#d8d8d8"/><rect x="12.0" y="13.5" width="3.800" height="2.600" fill="#d8d8d8"/><rect x="16.8" y="13.5" width="3.800" height="2.600" fill="#d8d8d8"/><rect x="2.4" y="17.2" width="3.800" height="2.600" fill="#d8d8d8"/><rect x="7.2" y="17.2" width="3.800" height="2.600" fill="#d8d8d8"/><rect x="12.0" y="17.2" width="3.800" height="2.600" fill="#d8d8d8"/><rect x="16.8" y="17.2" width="3.800" height="2.600" fill="#d8d8d8"/><path d="M4.5 4.5L18.5 17.5M18.5 4.5L4.5 17.5" stroke="#e81010" stroke-width="4.4" stroke-linecap="round"/></svg>
<svg style="left:955px;top:748px;" width="125" height="30" viewBox="955 748 125 30"><rect x="961" y="752.5" width="9.5" height="5.5" fill="#fff"/><path d="M961 752.5H970.5V758.0H961" stroke="#6a6a6a" stroke-width="1" fill="none"/><rect x="961" y="760" width="10" height="5.8" fill="#10984a"/><rect x="961" y="767.2" width="10" height="5.8" fill="#10984a"/><path d="M973 762.3Q980.500 761.500 980 767.500Q979.500 771.500 976 771.300" stroke="#10984a" stroke-width="2.400" fill="none"/><path d="M972.300 771.300L977.200 767.500V775Z" fill="#10984a"/><rect x="992" y="752.5" width="9.5" height="5.5" fill="#fff"/><path d="M992 752.5H1001.5V758.0H992" stroke="#6a6a6a" stroke-width="1" fill="none"/><rect x="992" y="767.5" width="9.5" height="5.5" fill="#fff"/><path d="M992 767.5H1001.5V773.0H992" stroke="#6a6a6a" stroke-width="1" fill="none"/><rect x="991.5" y="760" width="10.5" height="5.800" fill="#f01010"/><path d="M1003.5 758.5L1012 767.5M1012 758.5L1003.5 767.5" stroke="#e81010" stroke-width="2.8" stroke-linecap="round"/><rect x="1023" y="752.5" width="9.5" height="5.5" fill="#fff"/><path d="M1023 752.5H1032.5V758.0H1023" stroke="#6a6a6a" stroke-width="1" fill="none"/><rect x="1023" y="767.5" width="9.5" height="5.5" fill="#fff"/><path d="M1023 767.5H1032.5V773.0H1023" stroke="#6a6a6a" stroke-width="1" fill="none"/><rect x="1033.5" y="759.800" width="10" height="6.200" fill="#f4fff4" stroke="#40b070" stroke-width="1.100"/><path d="M1023 763L1029.500 757.800V761H1035V765H1029.500V768.200Z" fill="#10984a"/><rect x="1054" y="752.5" width="9.5" height="5.5" fill="#fff"/><path d="M1054 752.5H1063.5V758.0H1054" stroke="#6a6a6a" stroke-width="1" fill="none"/><rect x="1054" y="767.5" width="9.5" height="5.5" fill="#fff"/><path d="M1054 767.5H1063.5V773.0H1054" stroke="#6a6a6a" stroke-width="1" fill="none"/><rect x="1054.5" y="759.800" width="10" height="6.200" fill="#fff6f6" stroke="#f08080" stroke-width="1.100"/><path d="M1075 763L1068.500 757.800V761H1063.500V765H1068.500V768.200Z" fill="#f01010"/></svg>
<svg style="left:1092px;top:753px;" width="23" height="22" viewBox="0 0 23 22"><rect x="0.9" y="0.9" width="21.200" height="20.200" fill="#fbfbfb" stroke="#5a5a5a" stroke-width="1.600"/><rect x="1.800" y="1.800" width="19.400" height="7.400" fill="#b8b8f4"/><path d="M1.800 4.300H21.200M1.800 6.800H21.200M8 1.800V9.200M15 1.800V9.200" stroke="#dcdcfc" stroke-width="0.800"/></svg>
<svg style="left:1130px;top:752px;" width="25" height="24" viewBox="0 0 25 24"><rect x="11.5" y="0.5" width="12" height="9" fill="#f4f4f4" stroke="#777" stroke-width="0.9"/><rect x="11.5" y="0.5" width="12" height="2.6" fill="#3848a8"/><text x="0.5" y="20.5" font-size="13.5" font-style="italic" font-weight="bold" font-family="Liberation Serif,serif" fill="#111">ab</text><path d="M16.5 15.5H22.5M16.5 19H22.5" stroke="#111" stroke-width="1.3"/></svg>
<div style="left:1156px;top:747px;width:33px;height:32px;background:#cce4f7;border:3px solid #79c943;"></div>
<svg style="left:1162px;top:752px;" width="26" height="26" viewBox="0 0 26 26"><text x="3" y="19.5" font-size="22" font-style="italic" font-family="Liberation Serif,serif" fill="#111" stroke="#111" stroke-width="0.35">f</text><text x="11.5" y="19.5" font-size="19" font-style="italic" font-family="Liberation Serif,serif" fill="#111" stroke="#111" stroke-width="0.35">x</text></svg>
<svg style="left:1194px;top:752px;" width="26" height="26" viewBox="0 0 26 26"><text x="1" y="20.5" font-size="22" font-style="italic" font-family="Liberation Serif,serif" fill="#111" stroke="#111" stroke-width="0.35">f</text><text x="9" y="20.5" font-size="19" font-style="italic" font-family="Liberation Serif,serif" fill="#111" stroke="#111" stroke-width="0.35">x</text><path d="M12.5 2.5L21 10M21 2.5L12.5 10" stroke="#e81010" stroke-width="2.8" stroke-linecap="round"/></svg>
<svg style="left:1225px;top:752px;" width="26" height="26" viewBox="0 0 26 26"><text x="1" y="20.5" font-size="22" font-style="italic" font-family="Liberation Serif,serif" fill="#111" stroke="#111" stroke-width="0.35">f</text><text x="9" y="20.5" font-size="19" font-style="italic" font-family="Liberation Serif,serif" fill="#111" stroke="#111" stroke-width="0.35">x</text><path d="M10 5Q16 -1.5 22 5Q16 10.5 10 5Z" fill="#fff" stroke="#1a1a6a" stroke-width="1.3"/><circle cx="16" cy="4.7" r="2.7" fill="#2a3aa0"/><circle cx="16" cy="4.7" r="1.1" fill="#0a0a30"/></svg>
<svg style="left:1262px;top:752px;" width="25" height="24" viewBox="0 0 25 24"><path d="M6.500 1.500H18L22.5 6V22.5H6.500Z" fill="#fdfdfd" stroke="#777" stroke-width="1.1"/><rect x="1" y="4.500" width="11.5" height="10.5" fill="#5a9a48"/><path d="M4 7L9.500 12.5M9.500 7L4 12.5" stroke="#fff" stroke-width="1.5"/><path d="M13.500 6H20.5V14H13.500M13.500 8.700H20.5M13.500 11.300H20.5M17 6V14" stroke="#5a9a48" stroke-width="1" fill="none"/><path d="M9.500 16.500H19.500L14.500 21Z" fill="#5a9a48"/></svg>
<svg style="left:1301px;top:752px;" width="24" height="24" viewBox="0 0 24 24"><rect x="1.5" y="8.500" width="21" height="14" fill="#f4f4f4" stroke="#555" stroke-width="1.3"/><rect x="1.5" y="8.500" width="21" height="3.500" fill="#888"/><path d="M4 15.5H10M4 19H10M13 15.5H20M13 19H20" stroke="#8a94c8" stroke-width="1.6"/><path d="M5 7Q9 3 14 3.500L19 2L23 8Q18 12 13 10.5Q9 10.5 5 7Z" fill="#f0c8a0" stroke="#8a6a4a" stroke-width="0.7"/><path d="M18 1.500L22.5 0.500L24 8L21 9Z" fill="#5a80c8"/></svg>
<svg style="left:1335px;top:752px;" width="26" height="24" viewBox="0 0 26 24"><circle cx="11.5" cy="5" r="1.8" fill="#e81010" stroke="#a00000" stroke-width="0.4"/><text x="0" y="18.5" font-size="8.5" font-family="Liberation Sans,sans-serif" fill="#111" letter-spacing="-0.2">[X,Y,Z]</text></svg>
<svg style="left:1146px;top:690px;" width="52" height="64" viewBox="0 0 52 64"><defs><filter id="sh" x="-30%" y="-30%" width="160%" height="160%"><feGaussianBlur stdDeviation="2.2"/></filter></defs><path d="M25.500 6L41 34H33V60H18V34H10Z" fill="#000" opacity="0.28" filter="url(#sh)"/><path d="M25.500 4L40.500 33H32.500V58H18.500V33H10.500Z" fill="#62a82e"/></svg>
<svg style="left:10px;top:10px;" width="21" height="21" viewBox="0 -0.5 21 21"><path d="M0.9 7L8.900 0.200Q12 -0.400 14.200 0.700Q18.600 3 19.200 6.400L18.600 10.200L13.400 17.800L10 14.700L9.400 9L6 7.500Z" fill="#52689c" stroke="#3a4870" stroke-width="0.600" stroke-linejoin="round"/><path d="M5 5l1.500 -1l1.300 1.200l-1.500 1Z" fill="#a4c0ea"/><path d="M8.5 3l1.500 -1l1.300 1.200l-1.500 1Z" fill="#a4c0ea"/><path d="M12 1.8l1.500 -1l1.300 1.200l-1.500 1Z" fill="#a4c0ea"/><path d="M9.5 6.5l1.500 -1l1.300 1.200l-1.500 1Z" fill="#a4c0ea"/><path d="M12.5 5l1.500 -1l1.300 1.200l-1.500 1Z" fill="#a4c0ea"/><path d="M15.5 4l1.500 -1l1.300 1.200l-1.500 1Z" fill="#a4c0ea"/><path d="M12 9.5l1.500 -1l1.300 1.200l-1.500 1Z" fill="#a4c0ea"/><path d="M15 8l1.500 -1l1.300 1.200l-1.500 1Z" fill="#a4c0ea"/><path d="M17.5 7l1.500 -1l1.300 1.200l-1.500 1Z" fill="#a4c0ea"/><path d="M12.5 13l1.500 -1l1.300 1.200l-1.500 1Z" fill="#a4c0ea"/><path d="M15 11.5l1.500 -1l1.300 1.200l-1.500 1Z" fill="#a4c0ea"/><path d="M10.200 10.500l2 -1l1.200 2.500l-2 1.200Z" fill="#e4f0ff"/><text x="-0.2" y="18.700" font-size="15" font-weight="bold" font-family="Liberation Sans,sans-serif" fill="#e6c228" stroke="#8a7620" stroke-width="0.800" paint-order="stroke">6</text></svg>
<svg style="left:615.7px;top:289.4px;" width="21" height="21" viewBox="0 -0.5 21 21"><path d="M0.9 7L8.900 0.200Q12 -0.400 14.200 0.700Q18.600 3 19.200 6.400L18.600 10.200L13.400 17.800L10 14.700L9.400 9L6 7.500Z" fill="#52689c" stroke="#3a4870" stroke-width="0.600" stroke-linejoin="round"/><path d="M5 5l1.500 -1l1.300 1.200l-1.500 1Z" fill="#a4c0ea"/><path d="M8.5 3l1.500 -1l1.300 1.200l-1.500 1Z" fill="#a4c0ea"/><path d="M12 1.8l1.500 -1l1.300 1.200l-1.500 1Z" fill="#a4c0ea"/><path d="M9.5 6.5l1.500 -1l1.300 1.200l-1.500 1Z" fill="#a4c0ea"/><path d="M12.5 5l1.500 -1l1.300 1.200l-1.500 1Z" fill="#a4c0ea"/><path d="M15.5 4l1.500 -1l1.300 1.200l-1.500 1Z" fill="#a4c0ea"/><path d="M12 9.5l1.500 -1l1.300 1.200l-1.500 1Z" fill="#a4c0ea"/><path d="M15 8l1.500 -1l1.300 1.200l-1.500 1Z" fill="#a4c0ea"/><path d="M17.5 7l1.500 -1l1.300 1.200l-1.500 1Z" fill="#a4c0ea"/><path d="M12.5 13l1.500 -1l1.300 1.200l-1.500 1Z" fill="#a4c0ea"/><path d="M15 11.5l1.500 -1l1.300 1.200l-1.500 1Z" fill="#a4c0ea"/><path d="M10.200 10.500l2 -1l1.200 2.500l-2 1.200Z" fill="#e4f0ff"/><text x="-0.2" y="18.700" font-size="15" font-weight="bold" font-family="Liberation Sans,sans-serif" fill="#e6c228" stroke="#8a7620" stroke-width="0.800" paint-order="stroke">6</text></svg>
<svg style="left:1px;top:42px;" width="20" height="16" viewBox="0 0 20 16"><rect x="0" y="0" width="20" height="15.5" fill="#283080"/><path d="M0 10.500H20" stroke="#fff" stroke-width="1.6"/><path d="M5.500 1V13" stroke="#fff" stroke-width="1.3"/><path d="M1 6.500L5.500 1.500L19 6" stroke="#fff" stroke-width="0.9" fill="none"/></svg>
<div style="left:0px;top:0px;width:1400px;height:1px;background:#7e7e7e;"></div>
<div style="left:0px;top:0px;width:1px;height:1050px;background:#6e6e6e;"></div>
<div style="left:1px;top:38px;width:1px;height:1012px;background:#b8b8b8;"></div>
<div style="left:1399px;top:0px;width:1px;height:1050px;background:#707070;"></div>
<div style="left:0px;top:1049px;width:1400px;height:1px;background:#707070;"></div>
</body></html>
